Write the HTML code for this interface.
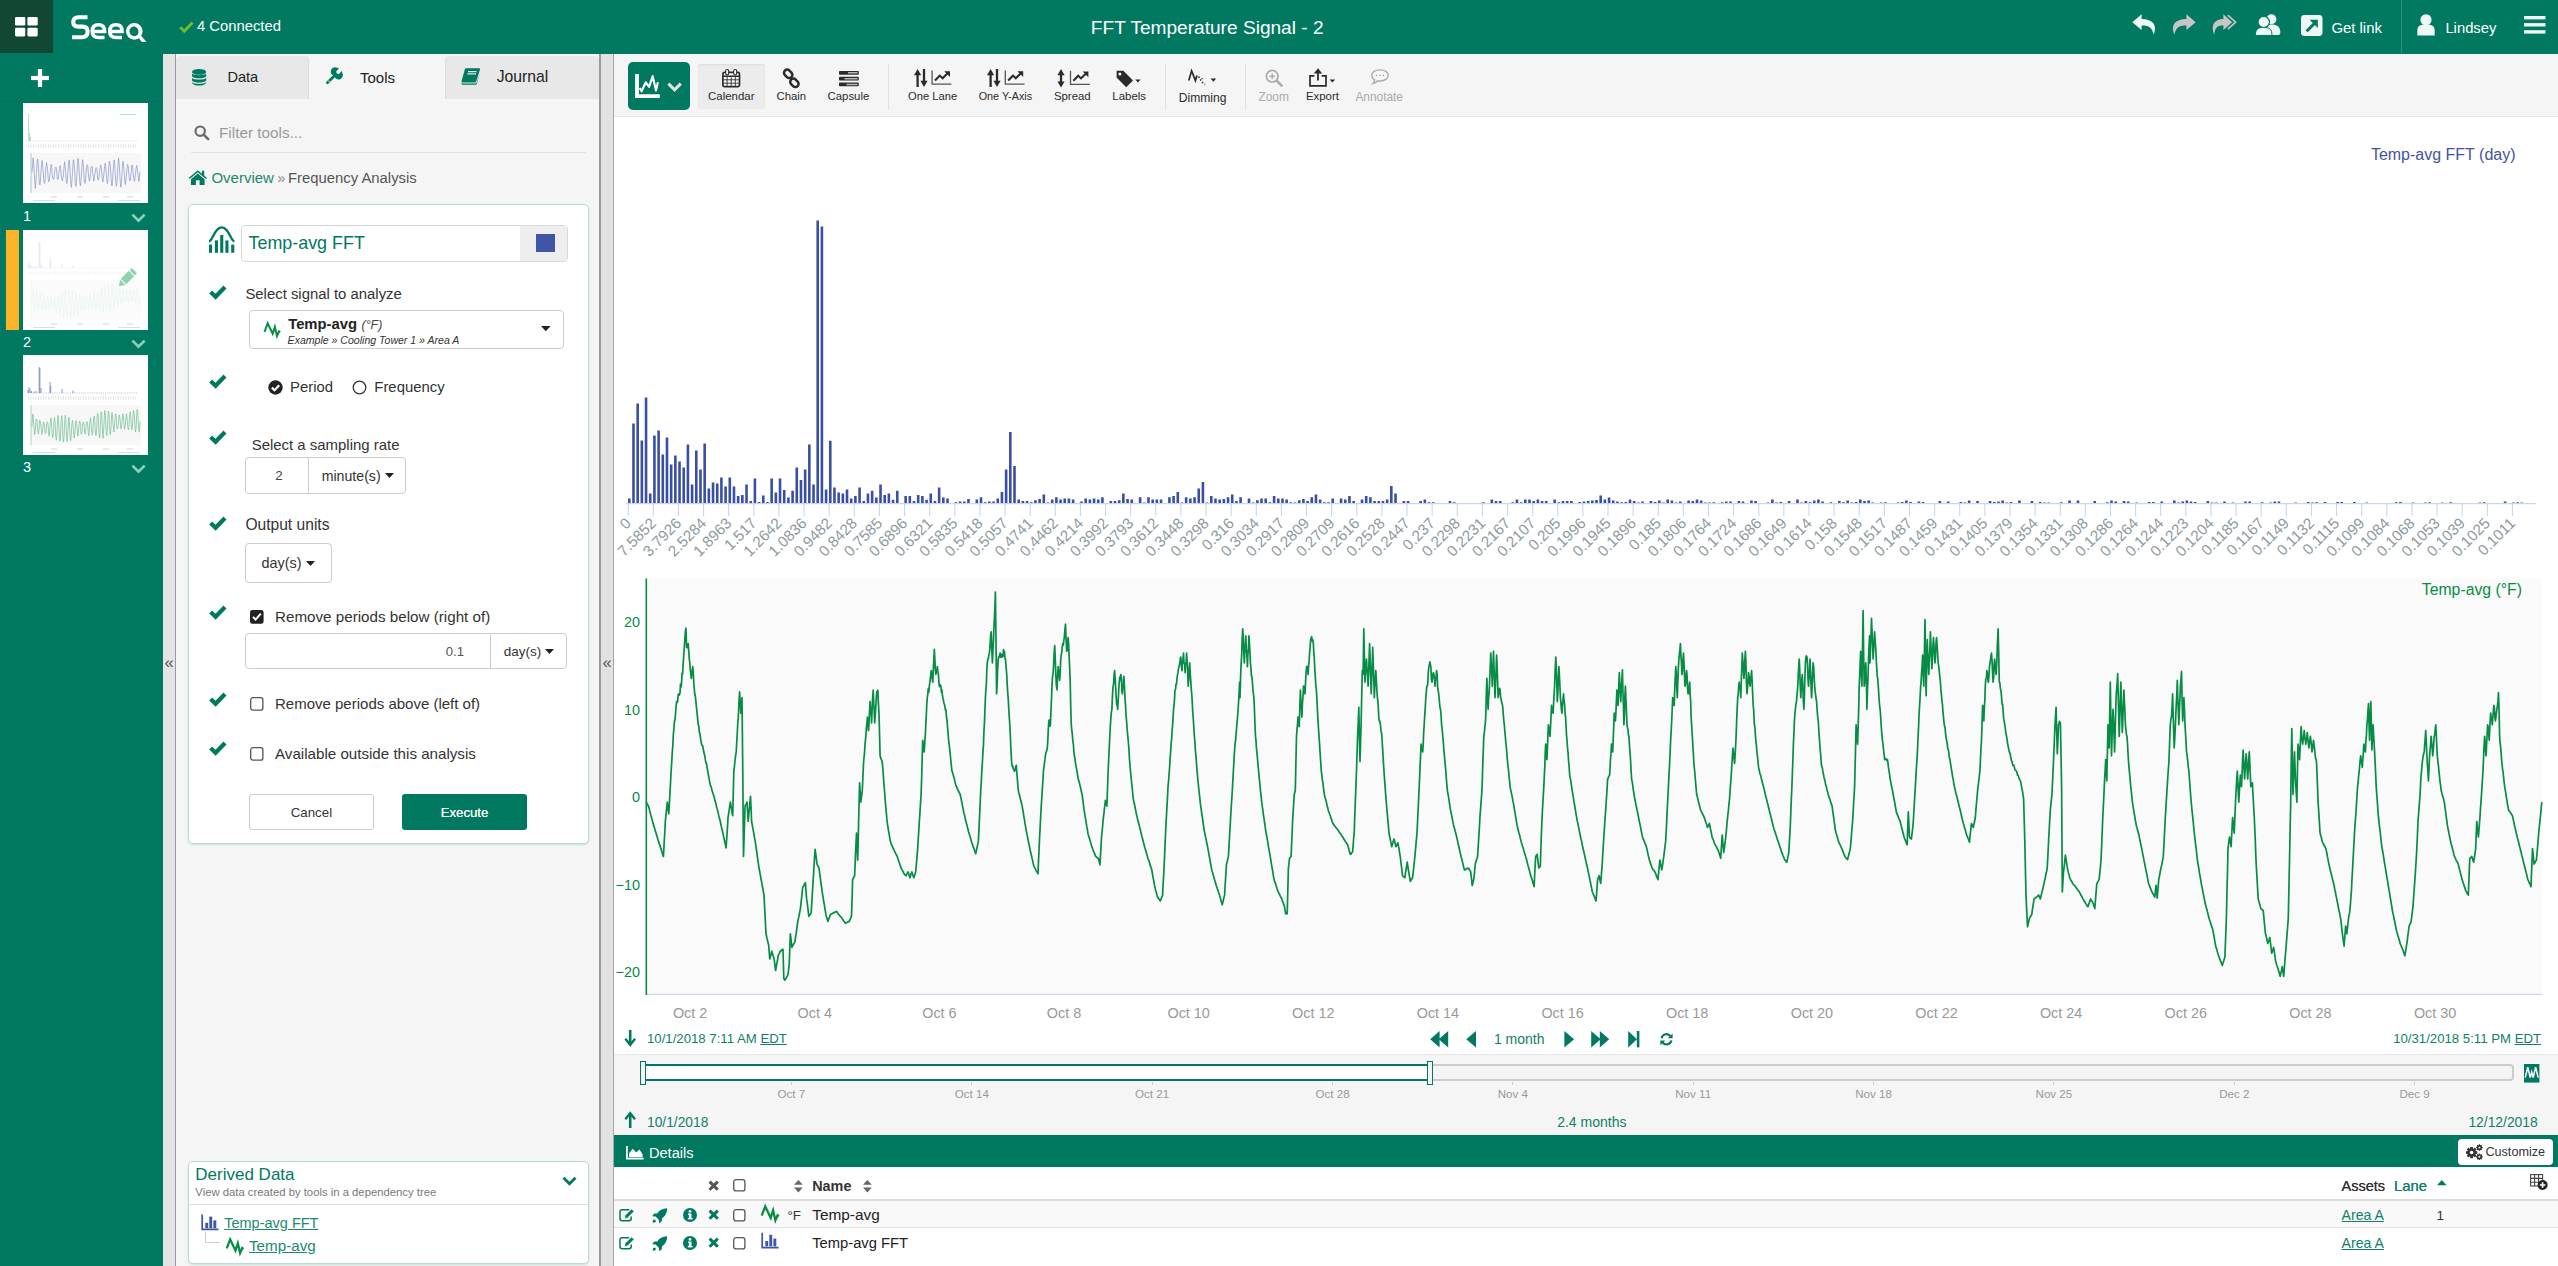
<!DOCTYPE html>
<html><head><meta charset="utf-8"><title>Seeq</title>
<style>
html,body{margin:0;padding:0;}
body{width:2558px;height:1266px;overflow:hidden;position:relative;background:#fff;font-family:"Liberation Sans",sans-serif;}
.a{position:absolute;box-sizing:border-box;}
.t{position:absolute;white-space:nowrap;line-height:1;}
.b{font-weight:bold;}
.i{font-style:italic;}
.u{text-decoration:underline;}
svg{overflow:visible;}
</style></head><body>
<div class="a" style="left:0.0px;top:0.0px;width:2558.0px;height:54.0px;background:#007960"></div>
<div class="a" style="left:0.0px;top:0.0px;width:53.0px;height:53.0px;background:#124734"></div>
<div class="a" style="left:0.0px;top:54.0px;width:163.0px;height:1212.0px;background:#007960"></div>
<div class="a" style="left:163.0px;top:54.0px;width:13.0px;height:1212.0px;background:#e4e4e4;border-right:1px solid #9a9a9a"></div>
<div class="a" style="left:176.0px;top:54.0px;width:424.0px;height:1212.0px;background:#f5f5f5"></div>
<div class="a" style="left:599.0px;top:54.0px;width:15.0px;height:1212.0px;background:#e2e2e2;border-left:2px solid #9a9a9a;border-right:1px solid #a6a6a6"></div>
<div class="a" style="left:614.0px;top:54.0px;width:1944.0px;height:63.0px;background:#f5f5f5;border-bottom:1px solid #e9e9e9"></div>
<svg class="a" style="left:15.0px;top:16.5px;" width="23.0" height="20.0" viewBox="0 0 23 20"><rect x="0" y="0" width="10.3" height="8.6" rx="1.3" fill="#fff"/><rect x="12.4" y="0" width="10.3" height="8.6" rx="1.3" fill="#fff"/><rect x="0" y="10.8" width="10.3" height="8.6" rx="1.3" fill="#fff"/><rect x="12.4" y="10.8" width="10.3" height="8.6" rx="1.3" fill="#fff"/></svg>
<svg class="a" style="left:71.0px;top:14.0px;" width="76.0" height="30.0" viewBox="0 0 76 30">
<g fill="none" stroke="#fff" stroke-width="4.1" stroke-linecap="butt">
<path d="M16.5 3.2 H7.5 Q2.2 3.2 2.2 8 Q2.2 12.6 7.5 12.6 H11.5 Q16.6 12.6 16.6 17.4 Q16.6 23.2 11 23.2 H1"/>
</g>
<g fill="none" stroke="#fff" stroke-width="3.5">
<path d="M22 17.5 H33.6 Q33.6 10.8 27.6 10.8 Q21.2 10.8 21.2 17.3 Q21.2 23.6 27.8 23.6 H33.5"/>
<path d="M39.5 17.5 H51.1 Q51.1 10.8 45.1 10.8 Q38.7 10.8 38.7 17.3 Q38.7 23.6 45.3 23.6 H51"/>
<circle cx="63.3" cy="17.3" r="6.6"/>
</g>
<path d="M64.5 12.2 Q69 14 68 20" fill="none" stroke="#fff" stroke-width="1.3"/>
<path d="M65.5 21 L69.5 21 L75.5 28 L70.8 28 Z" fill="#fff"/>
</svg>
<svg class="a" style="left:179.0px;top:20.5px;" width="15.0" height="12.0" viewBox="0 0 15 12"><path d="M1.2 6.2 L5.3 10.2 L13.6 1.6" fill="none" stroke="#6dbe2e" stroke-width="2.9"/></svg>
<div class="t " style="left:197.0px;top:18.6px;font-size:14.80px;color:#fff;">4 Connected</div>
<div class="t " style="left:1207.2px;transform:translateX(-50%);top:17.6px;font-size:19.10px;color:#fff;">FFT Temperature Signal - 2</div>
<svg class="a" style="left:2132.0px;top:13.8px;" width="24.0" height="21.0" viewBox="0 0 24 21"><path d="M9.6 0.3 L0.3 8.2 L9.6 16.1 V11.4 C16.5 11.2 20.4 13.4 21.6 20.8 C25.8 10.8 20.8 5.2 9.6 4.9 Z" fill="#eef7f4"/></svg>
<svg class="a" style="left:2172.0px;top:13.8px;" width="24.0" height="21.0" viewBox="0 0 24 21"><path d="M14.4 0.3 L23.7 8.2 L14.4 16.1 V11.4 C7.5 11.2 3.6 13.4 2.4 20.8 C-1.8 10.8 3.2 5.2 14.4 4.9 Z" fill="#c6c6c6"/></svg>
<svg class="a" style="left:2212.0px;top:13.8px;" width="25.0" height="21.0" viewBox="0 0 25 21"><path d="M11.4 0.3 L20.2 8.2 L11.4 16.1 V11.4 C5.5 11.2 3.1 13.4 2.1 20.8 C-1.6 10.8 2.4 5.2 11.4 4.9 Z" fill="#c6c6c6"/><path d="M15.8 1.2 L23.6 8.2 L15.8 15.2" fill="none" stroke="#c6c6c6" stroke-width="1.6"/></svg>
<svg class="a" style="left:2255.0px;top:13.5px;" width="26.0" height="22.0" viewBox="0 0 26 22"><circle cx="16.4" cy="5.2" r="5" fill="#eef7f4"/><path d="M10.5 21 C10.5 12.8 13 10.6 16.6 10.6 C21.8 10.6 25.4 12.6 25.4 19 Q25.4 21 23.2 21 Z" fill="#eef7f4"/><circle cx="8.7" cy="8" r="5.7" fill="#eef7f4" stroke="#007960" stroke-width="1.2"/><path d="M0.4 21.4 C0.4 14.5 3.6 13.4 8.7 13.4 C13.8 13.4 17 14.5 17 21.4 Z" fill="#eef7f4" stroke="#007960" stroke-width="1"/></svg>
<svg class="a" style="left:2301.0px;top:14.5px;" width="21.5" height="21.0" viewBox="0 0 21.5 21"><rect x="0" y="0" width="21.5" height="21" rx="3.4" fill="#eef7f4"/><path d="M5.6 16.2 L13.6 8.2" stroke="#007960" stroke-width="3"/><path d="M8.6 4.8 H16.8 V13 Z" fill="#007960"/></svg>
<div class="t " style="left:2331.4px;top:20.8px;font-size:14.90px;color:#fff;">Get link</div>
<div class="a" style="left:2401.0px;top:0.0px;width:1.0px;height:54.0px;background:#2f9079"></div>
<svg class="a" style="left:2417.0px;top:14.0px;" width="18.0" height="22.0" viewBox="0 0 18 22"><circle cx="9" cy="5.8" r="5.6" fill="#eef7f4"/><path d="M0.3 21.6 V16.5 C0.3 11.8 3.2 10.4 9 10.4 C14.8 10.4 17.7 11.8 17.7 16.5 V21.6 Z" fill="#eef7f4"/></svg>
<div class="t " style="left:2445.4px;top:20.9px;font-size:14.80px;color:#fff;">Lindsey</div>
<svg class="a" style="left:2524.0px;top:16.3px;" width="21.5" height="18.0" viewBox="0 0 21.5 18"><rect x="0" y="0" width="21.5" height="3.4" fill="#eef7f4"/><rect x="0" y="7.1" width="21.5" height="3.4" fill="#eef7f4"/><rect x="0" y="14.2" width="21.5" height="3.4" fill="#eef7f4"/></svg>
<svg class="a" style="left:31.0px;top:69.0px;" width="18.0" height="18.0" viewBox="0 0 18 18"><rect x="6.9" y="0" width="4.2" height="18" fill="#fff"/><rect x="0" y="6.9" width="18" height="4.2" fill="#fff"/></svg>
<div class="a" style="left:0.0px;top:100.5px;width:163.0px;height:1.0px;background:#027358"></div>
<div class="a" style="left:23.0px;top:103.0px;width:125.0px;height:100.0px;background:#fff"></div>
<svg class="a" style="left:23.0px;top:103.0px;" width="125.0" height="100.0" viewBox="0 0 125 100"><path d="M5 38 H115" stroke="#9fd7b8" stroke-width="0.6" stroke-dasharray="1.2 1" opacity=".7"/><path d="M5.5 38 V11 M6.5 38 V30 M7.5 38 V34" stroke="#9fd7b8" stroke-width="0.8"/><path d="M97 11.5 h16" stroke="#9fd7b8" stroke-width="1.2" opacity=".7"/><path d="M5 43 H113" stroke="#bbb" stroke-width="3" stroke-dasharray="0.8 1.7" opacity="0.55"/><rect x="8" y="50" width="110" height="40" fill="#f7f7f7" opacity="1"/><path d="M9.0 69.2 L9.6 61.8 L10.1 55.1 L10.7 60.8 L11.2 68.8 L11.8 79.1 L12.4 85.5 L12.9 79.0 L13.5 70.4 L14.1 60.0 L14.6 56.0 L15.2 60.3 L15.8 69.1 L16.3 80.5 L16.9 82.0 L17.4 78.4 L18.0 68.6 L18.6 60.4 L19.1 57.4 L19.7 62.7 L20.2 69.6 L20.8 77.0 L21.4 80.4 L21.9 79.2 L22.5 68.7 L23.1 63.1 L23.6 59.7 L24.2 63.7 L24.8 69.5 L25.3 77.0 L25.9 78.8 L26.4 76.5 L27.0 71.2 L27.6 64.6 L28.1 61.1 L28.7 63.3 L29.2 71.3 L29.8 75.1 L30.4 76.3 L30.9 76.4 L31.5 70.2 L32.1 65.7 L32.6 64.1 L33.2 64.4 L33.8 69.6 L34.3 76.2 L34.9 76.1 L35.4 76.0 L36.0 68.8 L36.6 65.2 L37.1 62.7 L37.7 65.6 L38.2 71.0 L38.8 76.1 L39.4 77.9 L39.9 75.4 L40.5 70.1 L41.1 63.2 L41.6 58.7 L42.2 63.9 L42.8 70.0 L43.3 78.3 L43.9 80.4 L44.4 77.4 L45.0 68.5 L45.6 61.0 L46.1 56.9 L46.7 60.8 L47.2 69.6 L47.8 80.2 L48.4 84.4 L48.9 78.5 L49.5 69.7 L50.1 59.3 L50.6 56.6 L51.2 61.6 L51.8 69.1 L52.3 80.7 L52.9 83.4 L53.4 78.4 L54.0 70.8 L54.6 59.7 L55.1 55.3 L55.7 60.2 L56.2 69.2 L56.8 79.1 L57.4 82.9 L57.9 78.8 L58.5 70.3 L59.1 60.7 L59.6 56.7 L60.2 60.4 L60.8 68.8 L61.3 78.0 L61.9 80.4 L62.4 78.4 L63.0 70.0 L63.6 63.6 L64.1 61.8 L64.7 62.1 L65.2 68.6 L65.8 75.1 L66.4 78.2 L66.9 76.1 L67.5 70.7 L68.1 64.0 L68.6 63.8 L69.2 63.2 L69.8 71.0 L70.3 74.2 L70.9 78.2 L71.4 73.6 L72.0 71.4 L72.6 65.8 L73.1 64.5 L73.7 65.2 L74.2 69.0 L74.8 76.5 L75.4 77.2 L75.9 74.1 L76.5 70.3 L77.1 64.4 L77.6 61.8 L78.2 63.1 L78.8 68.9 L79.3 76.5 L79.9 79.0 L80.4 75.5 L81.0 69.8 L81.6 63.6 L82.1 60.3 L82.7 62.4 L83.2 69.7 L83.8 77.5 L84.4 80.7 L84.9 77.5 L85.5 69.8 L86.1 60.1 L86.6 58.1 L87.2 61.5 L87.8 70.3 L88.3 78.0 L88.9 83.0 L89.4 79.4 L90.0 68.8 L90.6 61.6 L91.1 56.8 L91.7 60.1 L92.2 70.6 L92.8 79.0 L93.4 83.2 L93.9 79.9 L94.5 70.7 L95.1 60.7 L95.6 54.9 L96.2 60.9 L96.8 71.2 L97.3 79.9 L97.9 84.1 L98.4 80.3 L99.0 69.2 L99.6 60.9 L100.1 58.4 L100.7 63.3 L101.2 69.6 L101.8 79.0 L102.4 81.6 L102.9 77.3 L103.5 70.4 L104.1 64.6 L104.6 61.5 L105.2 63.0 L105.8 71.0 L106.3 75.1 L106.9 77.9 L107.4 77.0 L108.0 71.0 L108.6 64.0 L109.1 61.9 L109.7 65.2 L110.2 71.0 L110.8 75.6 L111.4 78.4 L111.9 75.6 L112.5 71.0 L113.1 65.4 L113.6 62.5 L114.2 64.7 L114.8 70.0 L115.3 75.3 L115.9 78.5 L116.4 74.7 L117.0 68.7" fill="none" stroke="#8b93c7" stroke-width="0.7"/><path d="M8 50 V90" stroke="#8b93c7" stroke-width="0.6"/><path d="M28 94 h6 M54 94 h6 M80 94 h6 M104 94 h6" stroke="#ccc" stroke-width="1.2" opacity=".8"/><path d="M10 97.5 h22 M95 97.5 h22" stroke="#bfe0d2" stroke-width="1.2" opacity=".8"/></svg>
<div class="a" style="left:23.0px;top:229.5px;width:125.0px;height:100.0px;background:#fff"></div>
<svg class="a" style="left:23.0px;top:229.5px;" width="125.0" height="100.0" viewBox="0 0 125 100"><path d="M5 38 H115" stroke="#dfe2f1" stroke-width="0.6" stroke-dasharray="1.2 1" opacity=".7"/><path d="M5 38 V35 M6 38 V32 M7 38 V34 M8.5 38 V36 M11 38 V36.5 M13 38 V36 M16.2 38 V12 M16.9 38 V13 M18 38 V33 M27 38 V27 M27.7 38 V31 M39 38 V34 M50 38 V35.5" stroke="#dfe2f1" stroke-width="0.8"/><path d="M5 43 H113" stroke="#bbb" stroke-width="3" stroke-dasharray="0.8 1.7" opacity="0.25"/><rect x="8" y="50" width="110" height="40" fill="#f7f7f7" opacity=".5"/><path d="M9.0 71.4 L9.4 59.7 L9.9 58.4 L10.3 60.5 L10.8 71.8 L11.2 77.5 L11.7 83.5 L12.2 79.4 L12.6 71.7 L13.1 64.2 L13.5 58.9 L13.9 62.7 L14.4 71.6 L14.9 77.8 L15.3 80.7 L15.8 77.5 L16.2 72.4 L16.6 65.8 L17.1 63.0 L17.5 64.3 L18.0 72.9 L18.4 77.8 L18.9 79.4 L19.4 77.5 L19.8 71.7 L20.2 65.2 L20.7 64.6 L21.1 66.4 L21.6 72.4 L22.1 78.6 L22.5 79.8 L23.0 77.0 L23.4 73.6 L23.9 69.3 L24.3 65.9 L24.8 69.3 L25.2 71.3 L25.7 76.3 L26.1 78.4 L26.6 78.8 L27.0 73.5 L27.4 69.0 L27.9 65.8 L28.4 68.4 L28.8 74.3 L29.2 76.9 L29.7 79.1 L30.1 77.0 L30.6 73.3 L31.1 69.2 L31.5 66.1 L31.9 67.7 L32.4 73.5 L32.8 78.3 L33.3 83.3 L33.8 79.2 L34.2 72.9 L34.6 66.8 L35.1 65.5 L35.5 66.6 L36.0 75.0 L36.5 80.3 L36.9 83.8 L37.4 79.9 L37.8 75.1 L38.2 67.2 L38.7 62.9 L39.2 64.9 L39.6 73.9 L40.0 81.8 L40.5 86.8 L41.0 83.7 L41.4 74.7 L41.8 64.7 L42.3 60.2 L42.8 66.3 L43.2 75.3 L43.7 82.0 L44.1 86.8 L44.5 83.0 L45.0 75.4 L45.5 63.4 L45.9 59.7 L46.4 65.8 L46.8 74.1 L47.2 83.0 L47.7 87.6 L48.1 83.2 L48.6 74.4 L49.1 64.1 L49.5 60.0 L49.9 63.5 L50.4 73.3 L50.9 82.8 L51.3 85.3 L51.8 81.6 L52.2 74.0 L52.6 66.1 L53.1 62.6 L53.5 65.1 L54.0 74.5 L54.5 81.9 L54.9 85.0 L55.3 81.7 L55.8 71.9 L56.2 66.9 L56.7 63.3 L57.2 66.3 L57.6 73.2 L58.0 78.2 L58.5 80.8 L59.0 80.3 L59.4 72.4 L59.9 68.4 L60.3 65.5 L60.8 66.8 L61.2 72.1 L61.6 78.1 L62.1 80.3 L62.6 76.9 L63.0 71.1 L63.4 66.5 L63.9 66.6 L64.3 68.2 L64.8 70.9 L65.2 77.7 L65.7 78.7 L66.2 76.0 L66.6 73.0 L67.0 66.0 L67.5 63.9 L67.9 66.4 L68.4 72.2 L68.8 76.4 L69.3 78.2 L69.8 77.5 L70.2 70.9 L70.7 66.8 L71.1 62.1 L71.6 66.4 L72.0 69.9 L72.5 76.9 L72.9 79.9 L73.3 77.0 L73.8 70.8 L74.2 64.4 L74.7 62.1 L75.2 63.4 L75.6 69.4 L76.0 77.2 L76.5 80.1 L77.0 76.0 L77.4 70.0 L77.8 62.2 L78.3 57.9 L78.8 62.5 L79.2 70.4 L79.7 77.1 L80.1 82.2 L80.5 79.1 L81.0 69.7 L81.4 60.3 L81.9 56.1 L82.4 59.1 L82.8 68.2 L83.2 79.3 L83.7 80.2 L84.1 79.0 L84.6 69.2 L85.1 60.2 L85.5 54.3 L86.0 59.6 L86.4 67.4 L86.8 77.9 L87.3 82.0 L87.8 77.8 L88.2 68.1 L88.7 60.1 L89.1 54.4 L89.5 57.9 L90.0 68.8 L90.5 75.0 L90.9 79.5 L91.3 75.7 L91.8 68.6 L92.2 58.8 L92.7 56.1 L93.2 59.3 L93.6 67.1 L94.0 74.7 L94.5 77.5 L94.9 74.6 L95.4 66.8 L95.9 59.7 L96.3 58.5 L96.8 61.6 L97.2 66.0 L97.6 74.4 L98.1 74.0 L98.6 72.1 L99.0 67.8 L99.5 59.8 L99.9 59.1 L100.3 62.5 L100.8 66.8 L101.2 71.5 L101.7 72.2 L102.2 71.2 L102.6 66.2 L103.0 62.3 L103.5 59.1 L104.0 62.4 L104.4 65.9 L104.8 71.2 L105.3 73.4 L105.8 69.7 L106.2 67.5 L106.7 61.3 L107.1 59.5 L107.5 62.8 L108.0 66.2 L108.4 70.8 L108.9 72.0 L109.4 70.1 L109.8 66.8 L110.2 60.9 L110.7 59.1 L111.1 61.3 L111.6 66.5 L112.1 71.0 L112.5 75.1 L113.0 71.7 L113.4 65.1 L113.8 61.0 L114.3 58.4 L114.8 58.5 L115.2 67.2 L115.7 73.4 L116.1 75.2 L116.5 73.4 L117.0 67.4" fill="none" stroke="#e6f4ed" stroke-width="0.7"/><path d="M8 50 V90" stroke="#e6f4ed" stroke-width="0.6"/><path d="M28 94 h6 M54 94 h6 M80 94 h6 M104 94 h6" stroke="#ccc" stroke-width="1.2" opacity=".8"/><path d="M10 97.5 h22 M95 97.5 h22" stroke="#bfe0d2" stroke-width="1.2" opacity=".8"/></svg>
<div class="a" style="left:23.0px;top:354.7px;width:125.0px;height:100.0px;background:#fff"></div>
<svg class="a" style="left:23.0px;top:354.7px;" width="125.0" height="100.0" viewBox="0 0 125 100"><path d="M5 38 H115" stroke="#6f7bc0" stroke-width="0.6" stroke-dasharray="1.2 1" opacity=".7"/><path d="M5 38 V35 M6 38 V32 M7 38 V34 M8.5 38 V36 M11 38 V36.5 M13 38 V36 M16.2 38 V12 M16.9 38 V13 M18 38 V33 M27 38 V27 M27.7 38 V31 M39 38 V34 M50 38 V35.5" stroke="#6f7bc0" stroke-width="0.8"/><path d="M5 43 H113" stroke="#bbb" stroke-width="3" stroke-dasharray="0.8 1.7" opacity="0.55"/><rect x="8" y="50" width="110" height="40" fill="#f7f7f7" opacity="1"/><path d="M9.0 71.4 L9.4 61.9 L9.9 59.0 L10.3 65.0 L10.8 69.4 L11.2 75.7 L11.7 79.8 L12.2 76.2 L12.6 71.8 L13.1 64.1 L13.5 64.2 L13.9 64.8 L14.4 71.3 L14.9 77.6 L15.3 79.0 L15.8 77.6 L16.2 71.9 L16.6 65.1 L17.1 65.8 L17.5 67.1 L18.0 71.1 L18.4 75.4 L18.9 79.4 L19.4 76.7 L19.8 73.2 L20.2 68.2 L20.7 66.9 L21.1 67.7 L21.6 72.8 L22.1 77.3 L22.5 78.4 L23.0 78.6 L23.4 71.9 L23.9 68.4 L24.3 66.7 L24.8 67.9 L25.2 71.7 L25.7 79.2 L26.1 81.3 L26.6 77.7 L27.0 71.6 L27.4 67.1 L27.9 62.9 L28.4 68.0 L28.8 73.2 L29.2 80.0 L29.7 82.7 L30.1 80.8 L30.6 74.6 L31.1 65.5 L31.5 62.5 L31.9 66.1 L32.4 72.9 L32.8 81.8 L33.3 85.2 L33.8 81.7 L34.2 74.2 L34.6 65.3 L35.1 60.4 L35.5 66.6 L36.0 73.4 L36.5 82.5 L36.9 86.2 L37.4 84.2 L37.8 75.2 L38.2 64.8 L38.7 60.7 L39.2 63.5 L39.6 75.1 L40.0 82.2 L40.5 87.1 L41.0 82.7 L41.4 73.5 L41.8 64.5 L42.3 60.3 L42.8 63.7 L43.2 74.1 L43.7 83.7 L44.1 86.7 L44.5 81.7 L45.0 74.6 L45.5 64.3 L45.9 62.1 L46.4 66.8 L46.8 75.2 L47.2 81.6 L47.7 85.8 L48.1 81.4 L48.6 73.9 L49.1 66.9 L49.5 65.4 L49.9 67.7 L50.4 73.7 L50.9 80.9 L51.3 83.1 L51.8 79.4 L52.2 74.5 L52.6 68.7 L53.1 65.7 L53.5 69.2 L54.0 72.0 L54.5 78.8 L54.9 81.2 L55.3 78.0 L55.8 72.3 L56.2 68.9 L56.7 66.1 L57.2 67.7 L57.6 71.7 L58.0 79.1 L58.5 79.1 L59.0 76.4 L59.4 72.0 L59.9 67.5 L60.3 67.4 L60.8 67.1 L61.2 72.0 L61.6 76.1 L62.1 79.1 L62.6 76.4 L63.0 71.9 L63.4 68.1 L63.9 66.4 L64.3 68.0 L64.8 70.7 L65.2 77.1 L65.7 80.8 L66.2 76.2 L66.6 70.9 L67.0 65.8 L67.5 62.7 L67.9 66.1 L68.4 72.2 L68.8 77.9 L69.3 80.1 L69.8 77.4 L70.2 70.5 L70.7 62.6 L71.1 61.1 L71.6 62.4 L72.0 72.1 L72.5 79.1 L72.9 80.7 L73.3 78.8 L73.8 70.9 L74.2 60.7 L74.7 58.3 L75.2 60.3 L75.6 71.0 L76.0 77.5 L76.5 83.0 L77.0 80.4 L77.4 70.9 L77.8 59.9 L78.3 56.9 L78.8 59.4 L79.2 69.1 L79.7 79.8 L80.1 83.4 L80.5 77.0 L81.0 68.9 L81.4 60.5 L81.9 55.3 L82.4 60.9 L82.8 70.1 L83.2 77.8 L83.7 80.7 L84.1 78.4 L84.6 68.6 L85.1 59.1 L85.5 56.0 L86.0 59.2 L86.4 69.3 L86.8 76.1 L87.3 79.7 L87.8 76.6 L88.2 69.4 L88.7 59.7 L89.1 57.5 L89.5 61.9 L90.0 68.5 L90.5 73.9 L90.9 77.2 L91.3 72.9 L91.8 66.4 L92.2 60.0 L92.7 58.7 L93.2 60.8 L93.6 67.3 L94.0 74.0 L94.5 73.6 L94.9 72.4 L95.4 68.1 L95.9 62.2 L96.3 60.0 L96.8 62.8 L97.2 65.3 L97.6 72.8 L98.1 73.8 L98.6 72.2 L99.0 67.6 L99.5 60.7 L99.9 58.7 L100.3 60.9 L100.8 66.4 L101.2 72.4 L101.7 74.2 L102.2 70.8 L102.6 66.7 L103.0 62.1 L103.5 58.7 L104.0 62.5 L104.4 67.5 L104.8 72.1 L105.3 75.0 L105.8 72.6 L106.2 66.5 L106.7 59.7 L107.1 56.9 L107.5 59.1 L108.0 64.7 L108.4 73.7 L108.9 74.8 L109.4 71.4 L109.8 65.5 L110.2 57.7 L110.7 55.6 L111.1 58.1 L111.6 65.0 L112.1 73.7 L112.5 76.9 L113.0 73.6 L113.4 67.0 L113.8 57.2 L114.3 54.3 L114.8 58.7 L115.2 67.5 L115.7 74.5 L116.1 77.2 L116.5 76.4 L117.0 66.2" fill="none" stroke="#6fbf92" stroke-width="0.7"/><path d="M8 50 V90" stroke="#6fbf92" stroke-width="0.6"/><path d="M28 94 h6 M54 94 h6 M80 94 h6 M104 94 h6" stroke="#ccc" stroke-width="1.2" opacity=".8"/><path d="M10 97.5 h22 M95 97.5 h22" stroke="#bfe0d2" stroke-width="1.2" opacity=".8"/></svg>
<div class="a" style="left:6.0px;top:229.5px;width:13.0px;height:100.0px;background:#fbb429"></div>
<svg class="a" style="left:116.0px;top:267.0px;" width="22.0" height="22.0" viewBox="0 0 22 22"><g transform="rotate(45 11 11)" fill="#8fd3b3"><rect x="7.2" y="0.5" width="7.6" height="3.2" rx="1"/><rect x="7.2" y="4.6" width="7.6" height="11.4"/><path d="M7.2 17 H14.8 L11 22.5 Z"/></g></svg>
<div class="t " style="left:23.0px;top:208.8px;font-size:14.50px;color:#fff;">1</div>
<svg class="a" style="left:130.5px;top:212.5px;" width="15.0" height="10.0" viewBox="0 0 15 10"><path d="M1.4 1.6 L7.5 7.6 L13.6 1.6" fill="none" stroke="#8fcfb9" stroke-width="2.7"/></svg>
<div class="t " style="left:23.0px;top:334.8px;font-size:14.50px;color:#fff;">2</div>
<svg class="a" style="left:130.5px;top:338.5px;" width="15.0" height="10.0" viewBox="0 0 15 10"><path d="M1.4 1.6 L7.5 7.6 L13.6 1.6" fill="none" stroke="#8fcfb9" stroke-width="2.7"/></svg>
<div class="t " style="left:23.0px;top:459.8px;font-size:14.50px;color:#fff;">3</div>
<svg class="a" style="left:130.5px;top:463.5px;" width="15.0" height="10.0" viewBox="0 0 15 10"><path d="M1.4 1.6 L7.5 7.6 L13.6 1.6" fill="none" stroke="#8fcfb9" stroke-width="2.7"/></svg>
<div class="t " style="left:164.4px;top:653.8px;font-size:16.50px;color:#555;">«</div>
<div class="t " style="left:602.4px;top:653.8px;font-size:16.50px;color:#555;">«</div>
<div class="a" style="left:176.0px;top:55.5px;width:132.7px;height:43.0px;background:#e8e8e8;border-radius:4px 4px 0 0;border-right:1px solid #dcdcdc"></div>
<div class="a" style="left:445.3px;top:55.5px;width:154.2px;height:43.0px;background:#e8e8e8;border-radius:4px 4px 0 0;border-left:1px solid #dcdcdc"></div>
<svg class="a" style="left:192.3px;top:68.6px;" width="14.2" height="16.6" viewBox="0 0 14.2 16.6"><g fill="#007960"><ellipse cx="7.1" cy="2.9" rx="7.1" ry="2.9"/><path d="M0 4.6 C1.6 6.8 12.6 6.8 14.2 4.6 V7.3 C12.6 10 1.6 10 0 7.3 Z"/><path d="M0 8.9 C1.6 11.1 12.6 11.1 14.2 8.9 V11.6 C12.6 14.3 1.6 14.3 0 11.6 Z"/><path d="M0 13.2 C1.6 15.4 12.6 15.4 14.2 13.2 V14 C12.6 17.4 1.6 17.4 0 14 Z"/></g></svg>
<div class="t " style="left:227.4px;top:70.3px;font-size:14.60px;color:#222;">Data</div>
<svg class="a" style="left:324.6px;top:68.0px;" width="17.0" height="17.0" viewBox="0 0 17 17"><g transform="translate(1.3 1.5) scale(0.82)"><g transform="rotate(45 8.75 8.75)" fill="#007960"><path d="M7.1 7.5 H10.4 V19.2 Q10.4 20.8 8.75 20.8 Q7.1 20.8 7.1 19.2 Z"/><path d="M4.2 -2 A5.2 5.2 0 0 0 7.1 8 H10.4 A5.2 5.2 0 0 0 13.3 -2 L11.1 -3.2 V1.7 L8.75 3.1 L6.4 1.7 V-3.2 Z"/></g><circle cx="3.3" cy="14.3" r="0.9" fill="#f5f5f5"/></g></svg>
<div class="t " style="left:360.0px;top:69.6px;font-size:15.00px;color:#222;">Tools</div>
<svg class="a" style="left:461.0px;top:68.0px;" width="19.2" height="17.0" viewBox="0 0 19.2 17"><g fill="#007960"><path d="M5.2 0.2 H18.4 Q19.4 0.4 19 1.6 L15.2 13.6 Q14.8 14.6 13.6 14.6 H1.6 Q0.2 14.4 0.6 13 L3.8 1.4 Q4.2 0.2 5.2 0.2 Z"/><path d="M0.5 14.4 Q0.2 16.8 2.6 16.8 H14.2 Q15.6 16.8 16 15.4 L19 4.6 L15.8 14.4 Q15.4 15.4 14 15.4 H2.4 Q1 15.4 0.5 14.4Z"/></g><path d="M7 3.6 H15.6 M6.4 5.9 H15" stroke="#e8e8e8" stroke-width="1.1"/></svg>
<div class="t " style="left:496.7px;top:69.2px;font-size:15.70px;color:#222;">Journal</div>
<svg class="a" style="left:194.0px;top:125.0px;" width="15.5" height="15.5" viewBox="0 0 15.5 15.5"><circle cx="6.2" cy="6.2" r="4.7" fill="none" stroke="#6b6b6b" stroke-width="2.2"/><path d="M9.6 9.6 L14.2 14.2" stroke="#6b6b6b" stroke-width="2.6" stroke-linecap="round"/></svg>
<div class="t " style="left:219.0px;top:124.8px;font-size:15.30px;color:#9a9a9a;">Filter tools...</div>
<div class="a" style="left:191.0px;top:151.5px;width:394.5px;height:1.0px;background:#e2e2e2"></div>
<svg class="a" style="left:188.0px;top:169.4px;" width="19.5" height="16.0" viewBox="0 0 19.5 16"><path d="M9.75 1.2 L0.6 8.9 L1.6 10 L9.75 3.2 L17.9 10 L18.9 8.9 L16.2 6.6 V1.8 H13.9 V4.7 Z" fill="#007960"/><path d="M9.75 4.6 L2.9 10.3 V16 H7.9 V11.3 H11.6 V16 H16.6 V10.3 Z" fill="#007960"/></svg>
<div class="t " style="left:211.4px;top:170.0px;font-size:15.00px;color:#1c8a70;">Overview</div>
<div class="t " style="left:277.5px;top:171.0px;font-size:14.00px;color:#888;">»</div>
<div class="t " style="left:288.0px;top:170.6px;font-size:14.85px;color:#555;">Frequency Analysis</div>
<div class="a" style="left:188.3px;top:203.5px;width:400.7px;height:640.5px;background:#fff;border:1px solid #b9ded3;border-radius:5px;box-shadow:0 1px 2px rgba(0,121,96,.18)"></div>
<svg class="a" style="left:207.5px;top:226.0px;" width="27.4" height="27.0" viewBox="0 0 27.4 27"><path d="M1 15.5 C5 14.5 6.6 1.4 13.7 1.4 C20.8 1.4 22.4 14.5 26.4 15.5" fill="none" stroke="#007960" stroke-width="2.3"/><g fill="#007960"><rect x="1" y="18.6" width="3.1" height="8.2"/><rect x="6.9" y="14.4" width="3.1" height="12.4"/><rect x="12.2" y="9" width="3.1" height="17.8"/><rect x="17.4" y="14.4" width="3.1" height="12.4"/><rect x="23.2" y="18.6" width="3.1" height="8.2"/></g></svg>
<div class="a" style="left:240.5px;top:224.7px;width:327.5px;height:37.3px;background:#fff;border:1px solid #d9d9d9;border-radius:4px"></div>
<div class="a" style="left:520.3px;top:225.5px;width:47.0px;height:35.7px;background:#eee;border-radius:0 4px 4px 0"></div>
<div class="a" style="left:536.3px;top:233.6px;width:18.8px;height:18.8px;background:#4055a5"></div>
<div class="t " style="left:248.5px;top:235.1px;font-size:17.90px;color:#007960;">Temp-avg FFT</div>
<svg class="a" style="left:208.6px;top:285.0px;" width="17.6" height="14.5" viewBox="0 0 17.6 14.5"><path d="M1.6 7 L6.6 11.8 L16 2" fill="none" stroke="#007960" stroke-width="4.2"/></svg>
<div class="t " style="left:245.4px;top:287.2px;font-size:14.90px;color:#333;">Select signal to analyze</div>
<div class="a" style="left:249.2px;top:310.0px;width:315.3px;height:39.2px;background:#fff;border:1px solid #ccc;border-radius:4px"></div>
<svg class="a" style="left:264.3px;top:322.0px;" width="16.5" height="15.0" viewBox="0 0 16.5 15"><path d="M0.5 9.8 L3.7 1.3 L8.7 11.8 L10.9 4.9 L13 14.1 L15 9.4 L16.2 10.3" fill="none" stroke="#068c45" stroke-width="2" stroke-linejoin="miter"/></svg>
<div class="t b" style="left:288.2px;top:317.0px;font-size:14.80px;color:#222;">Temp-avg</div>
<div class="t i" style="left:361.5px;top:319.2px;font-size:12.40px;color:#444;">(°F)</div>
<div class="t i" style="left:287.6px;top:335.3px;font-size:10.55px;color:#333;">Example » Cooling Tower 1 » Area A</div>
<svg class="a" style="left:541.2px;top:326.0px;" width="9.6" height="5.2" viewBox="0 0 9.6 5.2"><path d="M0 0 H9.6 L4.8 5.2 Z" fill="#222"/></svg>
<svg class="a" style="left:208.6px;top:374.0px;" width="17.6" height="14.5" viewBox="0 0 17.6 14.5"><path d="M1.6 7 L6.6 11.8 L16 2" fill="none" stroke="#007960" stroke-width="4.2"/></svg>
<svg class="a" style="left:267.8px;top:379.6px;" width="15.0" height="15.0" viewBox="0 0 15 15"><circle cx="7.5" cy="7.5" r="7.2" fill="#222"/><path d="M3.9 7.6 L6.5 10.2 L11.2 5.2" fill="none" stroke="#fff" stroke-width="2.2"/></svg>
<div class="t " style="left:290.0px;top:380.1px;font-size:14.90px;color:#333;">Period</div>
<svg class="a" style="left:352.0px;top:379.9px;" width="15.0" height="15.0" viewBox="0 0 15 15"><circle cx="7.5" cy="7.5" r="6.3" fill="#fff" stroke="#333" stroke-width="1.3"/></svg>
<div class="t " style="left:374.3px;top:380.1px;font-size:14.90px;color:#333;">Frequency</div>
<svg class="a" style="left:208.6px;top:430.0px;" width="17.6" height="14.5" viewBox="0 0 17.6 14.5"><path d="M1.6 7 L6.6 11.8 L16 2" fill="none" stroke="#007960" stroke-width="4.2"/></svg>
<div class="t " style="left:251.7px;top:437.6px;font-size:14.95px;color:#333;">Select a sampling rate</div>
<div class="a" style="left:245.4px;top:457.0px;width:161.0px;height:37.4px;background:#fff;border:1px solid #ccc;border-radius:4px"></div>
<div class="a" style="left:308.2px;top:457.0px;width:1.0px;height:37.4px;background:#ccc"></div>
<div class="t " style="left:279.0px;transform:translateX(-50%);top:469.4px;font-size:13.40px;color:#444;">2</div>
<div class="t " style="left:321.7px;top:468.5px;font-size:14.15px;color:#333;">minute(s)</div>
<svg class="a" style="left:384.6px;top:473.0px;" width="9.0" height="5.0" viewBox="0 0 9 5"><path d="M0 0 H9 L4.5 5 Z" fill="#222"/></svg>
<svg class="a" style="left:208.6px;top:516.0px;" width="17.6" height="14.5" viewBox="0 0 17.6 14.5"><path d="M1.6 7 L6.6 11.8 L16 2" fill="none" stroke="#007960" stroke-width="4.2"/></svg>
<div class="t " style="left:245.4px;top:517.0px;font-size:15.60px;color:#333;">Output units</div>
<div class="a" style="left:245.4px;top:543.0px;width:86.4px;height:40.2px;background:#fff;border:1px solid #ccc;border-radius:4px"></div>
<div class="t " style="left:261.6px;top:556.1px;font-size:14.40px;color:#333;">day(s)</div>
<svg class="a" style="left:306.0px;top:560.5px;" width="9.0" height="5.0" viewBox="0 0 9 5"><path d="M0 0 H9 L4.5 5 Z" fill="#222"/></svg>
<svg class="a" style="left:208.6px;top:604.5px;" width="17.6" height="14.5" viewBox="0 0 17.6 14.5"><path d="M1.6 7 L6.6 11.8 L16 2" fill="none" stroke="#007960" stroke-width="4.2"/></svg>
<svg class="a" style="left:250.1px;top:609.8px;" width="13.6" height="13.8" viewBox="0 0 13.6 13.8"><rect x="0" y="0" width="13.6" height="13.8" rx="2.4" fill="#222"/><path d="M3 6.9 L5.6 9.6 L10.8 3.6" fill="none" stroke="#fff" stroke-width="2"/></svg>
<div class="t " style="left:275.0px;top:608.7px;font-size:15.20px;color:#333;">Remove periods below (right of)</div>
<div class="a" style="left:245.4px;top:633.3px;width:321.6px;height:36.0px;background:#fff;border:1px solid #ccc;border-radius:4px"></div>
<div class="a" style="left:490.3px;top:633.3px;width:1.0px;height:36.0px;background:#ccc"></div>
<div class="t " style="right:2094.0px;top:644.9px;font-size:13.20px;color:#555;">0.1</div>
<div class="t " style="left:503.7px;top:644.8px;font-size:13.50px;color:#333;">day(s)</div>
<svg class="a" style="left:544.7px;top:648.6px;" width="9.0" height="5.0" viewBox="0 0 9 5"><path d="M0 0 H9 L4.5 5 Z" fill="#222"/></svg>
<svg class="a" style="left:208.6px;top:691.8px;" width="17.6" height="14.5" viewBox="0 0 17.6 14.5"><path d="M1.6 7 L6.6 11.8 L16 2" fill="none" stroke="#007960" stroke-width="4.2"/></svg>
<svg class="a" style="left:250.1px;top:696.9px;" width="13.6" height="13.8" viewBox="0 0 13.6 13.8"><rect x="0.7" y="0.7" width="12.2" height="12.4" rx="2.2" fill="#fff" stroke="#555" stroke-width="1.3"/></svg>
<div class="t " style="left:275.0px;top:695.8px;font-size:15.00px;color:#333;">Remove periods above (left of)</div>
<svg class="a" style="left:208.6px;top:741.2px;" width="17.6" height="14.5" viewBox="0 0 17.6 14.5"><path d="M1.6 7 L6.6 11.8 L16 2" fill="none" stroke="#007960" stroke-width="4.2"/></svg>
<svg class="a" style="left:250.1px;top:746.8px;" width="13.6" height="13.8" viewBox="0 0 13.6 13.8"><rect x="0.7" y="0.7" width="12.2" height="12.4" rx="2.2" fill="#fff" stroke="#555" stroke-width="1.3"/></svg>
<div class="t " style="left:275.0px;top:745.7px;font-size:15.15px;color:#333;">Available outside this analysis</div>
<div class="a" style="left:249.2px;top:793.8px;width:124.4px;height:36.7px;background:#fff;border:1px solid #ccc;border-radius:3px"></div>
<div class="t " style="left:311.4px;transform:translateX(-50%);top:805.6px;font-size:13.30px;color:#333;">Cancel</div>
<div class="a" style="left:402.0px;top:793.8px;width:125.0px;height:36.7px;background:#007960;border-radius:3px"></div>
<div class="t " style="left:464.5px;transform:translateX(-50%);top:805.7px;font-size:13.20px;color:#fff;text-shadow:0 0 .4px #fff">Execute</div>
<div class="a" style="left:188.3px;top:1160.6px;width:400.5px;height:103.6px;background:#fff;border:1px solid #b9ded3;border-radius:5px;box-shadow:0 1px 2px rgba(0,121,96,.18)"></div>
<div class="t " style="left:195.3px;top:1166.3px;font-size:17.00px;color:#007960;">Derived Data</div>
<div class="t " style="left:195.3px;top:1186.5px;font-size:11.30px;color:#777;">View data created by tools in a dependency tree</div>
<svg class="a" style="left:562.0px;top:1175.6px;" width="15.0" height="10.5" viewBox="0 0 15 10.5"><path d="M1.5 1.8 L7.5 7.8 L13.5 1.8" fill="none" stroke="#007960" stroke-width="2.8"/></svg>
<div class="a" style="left:189.3px;top:1204.3px;width:398.5px;height:1.0px;background:#ddd"></div>
<svg class="a" style="left:201.3px;top:1213.7px;" width="18.0" height="17.0" viewBox="0 0 18 17"><path d="M1.2 0.5 V15.4 H17.6" fill="none" stroke="#4055a5" stroke-width="1.7"/><g fill="#4055a5"><rect x="4.3" y="8.8" width="2.9" height="5.4"/><rect x="8.3" y="2.6" width="2.9" height="11.6"/><rect x="12.4" y="6.4" width="2.9" height="7.8"/></g></svg>
<div class="t u" style="left:224.2px;top:1215.8px;font-size:14.50px;color:#1c8a70;">Temp-avg FFT</div>
<svg class="a" style="left:204.5px;top:1232.0px;" width="15.0" height="12.0" viewBox="0 0 15 12"><path d="M0.5 0 V10.5 H14.5" fill="none" stroke="#ccc" stroke-width="1"/></svg>
<svg class="a" style="left:226.0px;top:1237.6px;" width="18.0" height="16.0" viewBox="0 0 16.5 15"><path d="M0.5 9.8 L3.7 1.3 L8.7 11.8 L10.9 4.9 L13 14.1 L15 9.4 L16.2 10.3" fill="none" stroke="#068c45" stroke-width="2.1" stroke-linejoin="miter"/></svg>
<div class="t u" style="left:249.0px;top:1237.9px;font-size:15.20px;color:#1c8a70;">Temp-avg</div>
<div class="a" style="left:628.0px;top:62.0px;width:62.0px;height:48.0px;background:#007960;border-radius:5px"></div>
<svg class="a" style="left:635.0px;top:73.5px;" width="26.0" height="25.0" viewBox="0 0 26 25"><path d="M2 0.1 V22.2 H24.8" fill="none" stroke="#fff" stroke-width="3.8"/><path d="M4.7 14 L6.6 17.3 L10.8 8.3 L14.1 12.8 L17.7 2.2 L21 16.6 L22.9 8.3" fill="none" stroke="#fff" stroke-width="2.1" stroke-linejoin="round"/></svg>
<svg class="a" style="left:666.6px;top:81.8px;" width="15.2" height="10.6" viewBox="0 0 15.2 10.6"><path d="M1.4 1.6 L7.6 7.9 L13.8 1.6" fill="none" stroke="#e2e2e2" stroke-width="3.1"/></svg>
<div class="a" style="left:697.5px;top:63.8px;width:67.4px;height:44.8px;background:#ececec;border-radius:3px;box-shadow:inset 0 1px 2px rgba(0,0,0,.08)"></div>
<svg class="a" style="left:722.4px;top:68.6px;" width="18.4" height="18.6" viewBox="0 0 18.4 18.6"><rect x="0.9" y="3.4" width="16.6" height="14.2" rx="1.6" fill="#fff" stroke="#2b2b2b" stroke-width="1.7"/><path d="M1 7.2 H17.4" stroke="#2b2b2b" stroke-width="1.5"/><path d="M1 10.8 H17.4 M1 14.2 H17.4 M5.1 7 V17.4 M9.2 7 V17.4 M13.3 7 V17.4" stroke="#2b2b2b" stroke-width="0.9"/><rect x="3.7" y="0.5" width="3" height="5.4" rx="1.5" fill="#fff" stroke="#2b2b2b" stroke-width="1.1"/><rect x="11.7" y="0.5" width="3" height="5.4" rx="1.5" fill="#fff" stroke="#2b2b2b" stroke-width="1.1"/></svg>
<div class="t " style="left:731.3px;transform:translateX(-50%);top:91.1px;font-size:11.45px;color:#2b2b2b;">Calendar</div>
<svg class="a" style="left:782.0px;top:68.6px;" width="18.6" height="18.6" viewBox="0 0 18.6 18.6"><g fill="none" stroke="#2b2b2b" stroke-width="2.5"><rect x="1.6" y="1.6" width="9.2" height="6.4" rx="3.2" transform="rotate(45 6.2 4.8)"/><rect x="7.8" y="10.6" width="9.2" height="6.4" rx="3.2" transform="rotate(45 12.4 13.8)"/></g></svg>
<div class="t " style="left:791.3px;transform:translateX(-50%);top:91.1px;font-size:11.40px;color:#2b2b2b;">Chain</div>
<svg class="a" style="left:838.8px;top:70.6px;" width="19.8" height="15.4" viewBox="0 0 19.8 15.4"><g fill="#2b2b2b"><rect x="0" y="0" width="19.8" height="3.7" rx=".8"/><rect x="0" y="5.8" width="19.8" height="3.7" rx=".8"/><rect x="0" y="11.6" width="19.8" height="3.7" rx=".8"/></g><path d="M9 1.85 H18.6 M5.5 7.65 H18.6 M7.5 13.45 H18.6" stroke="#b5b5b5" stroke-width="1.5"/></svg>
<div class="t " style="left:848.4px;transform:translateX(-50%);top:91.1px;font-size:11.40px;color:#2b2b2b;">Capsule</div>
<div class="a" style="left:888.0px;top:63.5px;width:1.0px;height:46.0px;background:#e0e0e0"></div>
<svg class="a" style="left:914.4px;top:68.6px;" width="39.0" height="18.0" viewBox="0 0 39 18"><path d="M3.6 4 V18" stroke="#2b2b2b" stroke-width="2.3"/><path d="M0 6.2 L3.6 0 L7.2 6.2 Z" fill="#2b2b2b"/><path d="M10 0 V14" stroke="#2b2b2b" stroke-width="2.3"/><path d="M6.4 11.8 L10 18 L13.6 11.8 Z" fill="#2b2b2b"/><g transform="translate(17.4 1.6)"><path d="M0.7 0 V13.6 H20" fill="none" stroke="#555" stroke-width="1.3"/><path d="M3.6 10 L8.4 5 L11.2 7.6 L16.2 2.6" fill="none" stroke="#2b2b2b" stroke-width="2.1"/><path d="M12.8 0.6 H18.6 V6.4 Z" fill="#2b2b2b"/></g></svg>
<div class="t " style="left:932.7px;transform:translateX(-50%);top:91.2px;font-size:11.20px;color:#2b2b2b;">One Lane</div>
<svg class="a" style="left:986.8px;top:68.6px;" width="39.0" height="18.0" viewBox="0 0 39 18"><path d="M3.6 4 V18" stroke="#2b2b2b" stroke-width="2.3"/><path d="M0 6.2 L3.6 0 L7.2 6.2 Z" fill="#2b2b2b"/><path d="M10 0 V14" stroke="#2b2b2b" stroke-width="2.3"/><path d="M6.4 11.8 L10 18 L13.6 11.8 Z" fill="#2b2b2b"/><g transform="translate(17.6 1.6)"><path d="M0.7 0 V13.6 H20" fill="none" stroke="#555" stroke-width="1.3"/><path d="M3.6 10 L8.4 5 L11.2 7.6 L16.2 2.6" fill="none" stroke="#2b2b2b" stroke-width="2.1"/><path d="M12.8 0.6 H18.6 V6.4 Z" fill="#2b2b2b"/></g></svg>
<div class="t " style="left:1005.4px;transform:translateX(-50%);top:91.4px;font-size:10.80px;color:#2b2b2b;">One Y-Axis</div>
<svg class="a" style="left:1056.5px;top:68.6px;" width="35.0" height="18.6" viewBox="0 0 35 18.6"><path d="M4 3 V15.6" stroke="#2b2b2b" stroke-width="2.3"/><path d="M0.4 6.2 L4 0 L7.6 6.2 Z M0.4 12.4 L4 18.6 L7.6 12.4 Z" fill="#2b2b2b"/><g transform="translate(12.8 1.8)"><path d="M0.7 0 V13.6 H20" fill="none" stroke="#555" stroke-width="1.3"/><path d="M3.6 10 L8.4 5 L11.2 7.6 L16.2 2.6" fill="none" stroke="#2b2b2b" stroke-width="2.1"/><path d="M12.8 0.6 H18.6 V6.4 Z" fill="#2b2b2b"/></g></svg>
<div class="t " style="left:1072.3px;transform:translateX(-50%);top:91.1px;font-size:11.40px;color:#2b2b2b;">Spread</div>
<svg class="a" style="left:1116.3px;top:69.6px;" width="25.0" height="17.0" viewBox="0 0 25 17"><path d="M0.6 0.8 H7.4 L17 10.4 L10.2 17.2 L0.6 7.6 Z" fill="#2b2b2b"/><circle cx="3.9" cy="4.1" r="1.5" fill="#f5f5f5"/><path d="M19.2 9.4 H24.6 L21.9 12.4 Z" fill="#2b2b2b"/></svg>
<div class="t " style="left:1129.2px;transform:translateX(-50%);top:91.1px;font-size:11.45px;color:#2b2b2b;">Labels</div>
<div class="a" style="left:1165.2px;top:63.5px;width:1.0px;height:46.0px;background:#e0e0e0"></div>
<svg class="a" style="left:1187.8px;top:70.0px;" width="29.0" height="15.0" viewBox="0 0 29 15"><path d="M0.8 10.4 L3.6 0.8 L7.4 10.6 L9 5.4" fill="none" stroke="#2b2b2b" stroke-width="1.7"/><path d="M10.6 6.6 L13 10.4 L14.6 12.6 L17 14.4" fill="none" stroke="#2b2b2b" stroke-width="1.5" stroke-dasharray="1.5 1.7"/><path d="M13.6 8.2 L15.4 9.8" stroke="#2b2b2b" stroke-width="1.3" stroke-dasharray="1.2 1.4"/><path d="M22.6 8.6 H28.2 L25.4 11.8 Z" fill="#2b2b2b"/></svg>
<div class="t " style="left:1202.6px;transform:translateX(-50%);top:91.8px;font-size:12.10px;color:#2b2b2b;">Dimming</div>
<div class="a" style="left:1245.0px;top:63.5px;width:1.0px;height:46.0px;background:#e0e0e0"></div>
<svg class="a" style="left:1265.0px;top:68.8px;" width="18.0" height="18.0" viewBox="0 0 18 18"><circle cx="7.2" cy="7.2" r="5.8" fill="none" stroke="#aaa" stroke-width="1.7"/><path d="M11.6 11.6 L16.6 16.6" stroke="#aaa" stroke-width="2.5" stroke-linecap="round"/><path d="M4.4 7.2 H10 M7.2 4.4 V10" stroke="#aaa" stroke-width="1.5"/></svg>
<div class="t " style="left:1273.7px;transform:translateX(-50%);top:91.5px;font-size:11.90px;color:#aaa;">Zoom</div>
<svg class="a" style="left:1308.7px;top:67.8px;" width="27.0" height="19.0" viewBox="0 0 27 19"><path d="M5.4 7.8 H1 V17.8 H17 V7.8 H12.6" fill="none" stroke="#2b2b2b" stroke-width="1.7"/><path d="M9 3.6 V12.6" stroke="#2b2b2b" stroke-width="1.8"/><path d="M4.8 5.4 L9 0.2 L13.2 5.4 Z" fill="#2b2b2b"/><path d="M20.6 11.4 H26.2 L23.4 14.6 Z" fill="#2b2b2b"/></svg>
<div class="t " style="left:1322.4px;transform:translateX(-50%);top:91.1px;font-size:11.40px;color:#2b2b2b;">Export</div>
<svg class="a" style="left:1370.8px;top:68.8px;" width="18.0" height="16.0" viewBox="0 0 18 16"><path d="M9 0.8 C13.8 0.8 17.2 3.2 17.2 6.4 C17.2 9.6 13.8 12 9 12 C8.2 12 7.4 11.9 6.7 11.8 C5.4 13.2 3.8 14.2 1.8 14.6 C2.9 13.4 3.6 12.2 3.7 10.8 C1.9 9.8 0.8 8.2 0.8 6.4 C0.8 3.2 4.2 0.8 9 0.8 Z" fill="none" stroke="#aaa" stroke-width="1.3"/><circle cx="5.6" cy="6.4" r=".8" fill="#aaa"/><circle cx="9" cy="6.4" r=".8" fill="#aaa"/><circle cx="12.4" cy="6.4" r=".8" fill="#aaa"/></svg>
<div class="t " style="left:1379.2px;transform:translateX(-50%);top:91.5px;font-size:11.90px;color:#aaa;">Annotate</div>
<div class="a" style="left:614.0px;top:117.0px;width:1944.0px;height:937.0px;background:#fff"></div>
<svg class="a" style="left:0;top:0" width="2558" height="1266" viewBox="0 0 2558 1266"><path d="M628.00 503.40v-5.00h2.6v5.00zM632.19 503.40v-80.00h2.6v80.00zM636.37 503.40v-100.00h2.6v100.00zM640.56 503.40v-63.00h2.6v63.00zM644.75 503.40v-106.00h2.6v106.00zM648.93 503.40v-10.00h2.6v10.00zM653.12 503.40v-68.00h2.6v68.00zM657.31 503.40v-73.00h2.6v73.00zM661.50 503.40v-49.00h2.6v49.00zM665.68 503.40v-66.00h2.6v66.00zM669.87 503.40v-39.00h2.6v39.00zM674.06 503.40v-48.00h2.6v48.00zM678.24 503.40v-42.00h2.6v42.00zM682.43 503.40v-36.00h2.6v36.00zM686.62 503.40v-59.00h2.6v59.00zM690.81 503.40v-19.00h2.6v19.00zM694.99 503.40v-53.00h2.6v53.00zM699.18 503.40v-34.00h2.6v34.00zM703.37 503.40v-60.00h2.6v60.00zM707.55 503.40v-15.00h2.6v15.00zM711.74 503.40v-21.00h2.6v21.00zM715.93 503.40v-20.00h2.6v20.00zM720.11 503.40v-26.00h2.6v26.00zM724.30 503.40v-17.00h2.6v17.00zM728.49 503.40v-26.00h2.6v26.00zM732.67 503.40v-17.00h2.6v17.00zM736.86 503.40v-7.50h2.6v7.50zM741.05 503.40v-8.50h2.6v8.50zM745.24 503.40v-19.00h2.6v19.00zM749.42 503.40v-2.50h2.6v2.50zM753.61 503.40v-25.00h2.6v25.00zM757.80 503.40v-1.50h2.6v1.50zM761.98 503.40v-8.00h2.6v8.00zM766.17 503.40v-1.50h2.6v1.50zM770.36 503.40v-25.00h2.6v25.00zM774.55 503.40v-11.00h2.6v11.00zM778.73 503.40v-25.00h2.6v25.00zM782.92 503.40v-13.50h2.6v13.50zM787.11 503.40v-6.00h2.6v6.00zM791.29 503.40v-12.60h2.6v12.60zM795.48 503.40v-36.00h2.6v36.00zM799.67 503.40v-23.50h2.6v23.50zM803.85 503.40v-34.00h2.6v34.00zM808.04 503.40v-59.00h2.6v59.00zM812.23 503.40v-19.00h2.6v19.00zM816.41 503.40v-283.00h2.6v283.00zM820.60 503.40v-277.00h2.6v277.00zM824.79 503.40v-14.00h2.6v14.00zM828.98 503.40v-62.60h2.6v62.60zM833.16 503.40v-16.00h2.6v16.00zM837.35 503.40v-11.00h2.6v11.00zM841.54 503.40v-10.00h2.6v10.00zM845.72 503.40v-14.00h2.6v14.00zM849.91 503.40v-5.00h2.6v5.00zM854.10 503.40v-7.50h2.6v7.50zM858.29 503.40v-16.00h2.6v16.00zM862.47 503.40v-2.50h2.6v2.50zM866.66 503.40v-10.00h2.6v10.00zM870.85 503.40v-12.60h2.6v12.60zM875.03 503.40v-6.00h2.6v6.00zM879.22 503.40v-19.00h2.6v19.00zM883.41 503.40v-8.50h2.6v8.50zM887.59 503.40v-10.00h2.6v10.00zM891.78 503.40v-3.70h2.6v3.70zM895.97 503.40v-12.60h2.6v12.60zM904.34 503.40v-7.50h2.6v7.50zM908.53 503.40v-7.50h2.6v7.50zM912.72 503.40v-2.50h2.6v2.50zM916.90 503.40v-8.50h2.6v8.50zM921.09 503.40v-7.50h2.6v7.50zM925.28 503.40v-3.70h2.6v3.70zM929.46 503.40v-10.00h2.6v10.00zM933.65 503.40v-2.50h2.6v2.50zM937.84 503.40v-15.80h2.6v15.80zM942.03 503.40v-5.80h2.6v5.80zM946.21 503.40v-5.00h2.6v5.00zM954.59 503.40v-1.20h2.6v1.20zM958.77 503.40v-2.00h2.6v2.00zM962.96 503.40v-2.00h2.6v2.00zM967.15 503.40v-4.50h2.6v4.50zM975.52 503.40v-3.80h2.6v3.80zM979.71 503.40v-6.20h2.6v6.20zM983.89 503.40v-1.20h2.6v1.20zM988.08 503.40v-2.00h2.6v2.00zM992.27 503.40v-2.00h2.6v2.00zM996.46 503.40v-5.00h2.6v5.00zM1000.64 503.40v-11.30h2.6v11.30zM1004.83 503.40v-34.00h2.6v34.00zM1009.02 503.40v-71.50h2.6v71.50zM1013.20 503.40v-37.50h2.6v37.50zM1017.39 503.40v-3.80h2.6v3.80zM1021.58 503.40v-2.50h2.6v2.50zM1025.77 503.40v-2.50h2.6v2.50zM1029.95 503.40v-1.20h2.6v1.20zM1034.14 503.40v-3.20h2.6v3.20zM1038.33 503.40v-4.50h2.6v4.50zM1042.51 503.40v-8.80h2.6v8.80zM1046.70 503.40v-0.80h2.6v0.80zM1050.89 503.40v-3.80h2.6v3.80zM1055.07 503.40v-6.20h2.6v6.20zM1059.26 503.40v-3.80h2.6v3.80zM1063.45 503.40v-5.00h2.6v5.00zM1067.63 503.40v-5.00h2.6v5.00zM1071.82 503.40v-3.80h2.6v3.80zM1080.20 503.40v-2.00h2.6v2.00zM1084.38 503.40v-5.00h2.6v5.00zM1088.57 503.40v-3.80h2.6v3.80zM1092.76 503.40v-5.00h2.6v5.00zM1096.94 503.40v-3.80h2.6v3.80zM1101.13 503.40v-6.20h2.6v6.20zM1109.51 503.40v-2.50h2.6v2.50zM1113.69 503.40v-2.50h2.6v2.50zM1117.88 503.40v-3.20h2.6v3.20zM1122.07 503.40v-10.00h2.6v10.00zM1126.25 503.40v-4.50h2.6v4.50zM1130.44 503.40v-3.80h2.6v3.80zM1138.81 503.40v-6.20h2.6v6.20zM1143.00 503.40v-0.80h2.6v0.80zM1147.19 503.40v-6.20h2.6v6.20zM1151.38 503.40v-3.80h2.6v3.80zM1155.56 503.40v-3.80h2.6v3.80zM1159.75 503.40v-3.80h2.6v3.80zM1168.12 503.40v-6.20h2.6v6.20zM1172.31 503.40v-7.50h2.6v7.50zM1176.50 503.40v-11.30h2.6v11.30zM1180.68 503.40v-0.80h2.6v0.80zM1184.87 503.40v-6.20h2.6v6.20zM1189.06 503.40v-5.00h2.6v5.00zM1193.24 503.40v-6.20h2.6v6.20zM1197.43 503.40v-15.00h2.6v15.00zM1201.62 503.40v-21.30h2.6v21.30zM1205.81 503.40v-0.80h2.6v0.80zM1209.99 503.40v-7.50h2.6v7.50zM1214.18 503.40v-5.00h2.6v5.00zM1218.37 503.40v-3.80h2.6v3.80zM1222.55 503.40v-4.50h2.6v4.50zM1226.74 503.40v-6.20h2.6v6.20zM1230.93 503.40v-8.80h2.6v8.80zM1235.12 503.40v-2.50h2.6v2.50zM1239.30 503.40v-6.20h2.6v6.20zM1247.68 503.40v-5.00h2.6v5.00zM1251.86 503.40v-0.80h2.6v0.80zM1256.05 503.40v-3.20h2.6v3.20zM1260.24 503.40v-5.00h2.6v5.00zM1264.42 503.40v-5.00h2.6v5.00zM1268.61 503.40v-1.20h2.6v1.20zM1272.80 503.40v-7.50h2.6v7.50zM1276.99 503.40v-5.00h2.6v5.00zM1281.17 503.40v-5.00h2.6v5.00zM1285.36 503.40v-3.80h2.6v3.80zM1289.55 503.40v-1.20h2.6v1.20zM1293.73 503.40v-0.80h2.6v0.80zM1297.92 503.40v-3.20h2.6v3.20zM1302.11 503.40v-4.50h2.6v4.50zM1306.29 503.40v-2.50h2.6v2.50zM1310.48 503.40v-6.20h2.6v6.20zM1314.67 503.40v-8.80h2.6v8.80zM1318.86 503.40v-3.80h2.6v3.80zM1323.04 503.40v-1.20h2.6v1.20zM1327.23 503.40v-1.20h2.6v1.20zM1331.42 503.40v-5.00h2.6v5.00zM1339.79 503.40v-5.00h2.6v5.00zM1343.98 503.40v-3.80h2.6v3.80zM1348.16 503.40v-7.50h2.6v7.50zM1352.35 503.40v-2.50h2.6v2.50zM1360.72 503.40v-3.80h2.6v3.80zM1364.91 503.40v-7.50h2.6v7.50zM1369.10 503.40v-6.20h2.6v6.20zM1373.29 503.40v-2.50h2.6v2.50zM1377.47 503.40v-2.50h2.6v2.50zM1381.66 503.40v-2.50h2.6v2.50zM1385.85 503.40v-3.80h2.6v3.80zM1390.03 503.40v-17.50h2.6v17.50zM1394.22 503.40v-10.00h2.6v10.00zM1402.60 503.40v-2.50h2.6v2.50zM1406.78 503.40v-2.50h2.6v2.50zM1419.34 503.40v-2.50h2.6v2.50zM1423.53 503.40v-3.80h2.6v3.80zM1427.72 503.40v-1.20h2.6v1.20zM1431.90 503.40v-1.20h2.6v1.20zM1448.65 503.40v-2.50h2.6v2.50zM1452.84 503.40v-1.20h2.6v1.20zM1482.15 503.40v-1.20h2.6v1.20zM1490.52 503.40v-3.80h2.6v3.80zM1494.71 503.40v-2.50h2.6v2.50zM1498.90 503.40v-2.50h2.6v2.50zM1511.46 503.40v-1.20h2.6v1.20zM1515.64 503.40v-3.80h2.6v3.80zM1519.83 503.40v-1.20h2.6v1.20zM1524.02 503.40v-3.80h2.6v3.80zM1528.20 503.40v-3.80h2.6v3.80zM1532.39 503.40v-2.50h2.6v2.50zM1536.58 503.40v-3.80h2.6v3.80zM1540.77 503.40v-2.50h2.6v2.50zM1544.95 503.40v-2.50h2.6v2.50zM1553.33 503.40v-3.80h2.6v3.80zM1557.51 503.40v-1.20h2.6v1.20zM1561.70 503.40v-2.50h2.6v2.50zM1565.89 503.40v-2.50h2.6v2.50zM1570.08 503.40v-2.50h2.6v2.50zM1578.45 503.40v-1.50h2.6v1.50zM1582.64 503.40v-2.00h2.6v2.00zM1586.82 503.40v-2.50h2.6v2.50zM1591.01 503.40v-3.00h2.6v3.00zM1595.20 503.40v-3.50h2.6v3.50zM1599.38 503.40v-7.80h2.6v7.80zM1603.57 503.40v-4.00h2.6v4.00zM1607.76 503.40v-6.00h2.6v6.00zM1611.95 503.40v-3.00h2.6v3.00zM1616.13 503.40v-2.00h2.6v2.00zM1620.32 503.40v-1.20h2.6v1.20zM1624.51 503.40v-1.50h2.6v1.50zM1628.69 503.40v-3.80h2.6v3.80zM1632.88 503.40v-2.50h2.6v2.50zM1637.07 503.40v-1.00h2.6v1.00zM1641.25 503.40v-2.00h2.6v2.00zM1649.63 503.40v-2.50h2.6v2.50zM1653.82 503.40v-1.50h2.6v1.50zM1658.00 503.40v-3.00h2.6v3.00zM1662.19 503.40v-1.00h2.6v1.00zM1666.38 503.40v-3.80h2.6v3.80zM1670.56 503.40v-3.00h2.6v3.00zM1674.75 503.40v-1.00h2.6v1.00zM1678.94 503.40v-2.00h2.6v2.00zM1687.31 503.40v-3.00h2.6v3.00zM1691.50 503.40v-2.50h2.6v2.50zM1695.69 503.40v-3.80h2.6v3.80zM1699.87 503.40v-3.00h2.6v3.00zM1704.06 503.40v-1.00h2.6v1.00zM1708.25 503.40v-1.00h2.6v1.00zM1712.43 503.40v-1.20h2.6v1.20zM1720.81 503.40v-1.20h2.6v1.20zM1724.99 503.40v-2.00h2.6v2.00zM1729.18 503.40v-2.00h2.6v2.00zM1737.56 503.40v-2.50h2.6v2.50zM1741.74 503.40v-2.00h2.6v2.00zM1750.12 503.40v-3.00h2.6v3.00zM1754.30 503.40v-2.50h2.6v2.50zM1766.86 503.40v-1.00h2.6v1.00zM1771.05 503.40v-3.80h2.6v3.80zM1775.24 503.40v-1.00h2.6v1.00zM1779.43 503.40v-1.50h2.6v1.50zM1787.80 503.40v-2.50h2.6v2.50zM1796.17 503.40v-3.80h2.6v3.80zM1800.36 503.40v-1.00h2.6v1.00zM1804.55 503.40v-2.50h2.6v2.50zM1808.73 503.40v-1.20h2.6v1.20zM1812.92 503.40v-3.00h2.6v3.00zM1817.11 503.40v-3.80h2.6v3.80zM1821.30 503.40v-2.00h2.6v2.00zM1829.67 503.40v-1.20h2.6v1.20zM1838.04 503.40v-2.50h2.6v2.50zM1842.23 503.40v-1.20h2.6v1.20zM1846.42 503.40v-3.00h2.6v3.00zM1850.60 503.40v-1.00h2.6v1.00zM1854.79 503.40v-1.50h2.6v1.50zM1858.98 503.40v-3.80h2.6v3.80zM1863.17 503.40v-2.50h2.6v2.50zM1867.35 503.40v-3.00h2.6v3.00zM1871.54 503.40v-1.00h2.6v1.00zM1879.91 503.40v-1.00h2.6v1.00zM1884.10 503.40v-1.20h2.6v1.20zM1896.66 503.40v-1.00h2.6v1.00zM1900.85 503.40v-1.50h2.6v1.50zM1905.04 503.40v-3.00h2.6v3.00zM1909.22 503.40v-1.50h2.6v1.50zM1917.60 503.40v-2.00h2.6v2.00zM1921.78 503.40v-1.50h2.6v1.50zM1938.53 503.40v-2.50h2.6v2.50zM1946.91 503.40v-2.00h2.6v2.00zM1959.47 503.40v-1.50h2.6v1.50zM1963.65 503.40v-1.00h2.6v1.00zM1967.84 503.40v-3.00h2.6v3.00zM1976.21 503.40v-2.50h2.6v2.50zM1988.78 503.40v-2.50h2.6v2.50zM1992.96 503.40v-1.50h2.6v1.50zM1997.15 503.40v-2.00h2.6v2.00zM2001.34 503.40v-3.00h2.6v3.00zM2005.52 503.40v-1.00h2.6v1.00zM2009.71 503.40v-1.50h2.6v1.50zM2018.08 503.40v-3.00h2.6v3.00zM2030.64 503.40v-2.50h2.6v2.50zM2039.02 503.40v-1.50h2.6v1.50zM2043.21 503.40v-1.00h2.6v1.00zM2047.39 503.40v-1.00h2.6v1.00zM2059.95 503.40v-1.20h2.6v1.20zM2068.33 503.40v-3.00h2.6v3.00zM2076.70 503.40v-3.00h2.6v3.00zM2093.45 503.40v-2.50h2.6v2.50zM2106.01 503.40v-1.20h2.6v1.20zM2110.20 503.40v-3.00h2.6v3.00zM2114.39 503.40v-2.00h2.6v2.00zM2122.76 503.40v-2.50h2.6v2.50zM2126.95 503.40v-2.00h2.6v2.00zM2135.32 503.40v-1.00h2.6v1.00zM2147.88 503.40v-1.50h2.6v1.50zM2152.07 503.40v-1.50h2.6v1.50zM2160.44 503.40v-2.00h2.6v2.00zM2173.00 503.40v-3.00h2.6v3.00zM2177.19 503.40v-1.00h2.6v1.00zM2181.38 503.40v-2.00h2.6v2.00zM2185.56 503.40v-3.00h2.6v3.00zM2189.75 503.40v-2.00h2.6v2.00zM2193.94 503.40v-1.50h2.6v1.50zM2206.50 503.40v-2.50h2.6v2.50zM2210.69 503.40v-1.00h2.6v1.00zM2214.87 503.40v-1.00h2.6v1.00zM2223.25 503.40v-2.00h2.6v2.00zM2231.62 503.40v-1.00h2.6v1.00zM2244.18 503.40v-2.00h2.6v2.00zM2248.37 503.40v-2.00h2.6v2.00zM2260.93 503.40v-1.20h2.6v1.20zM2269.30 503.40v-1.00h2.6v1.00zM2273.49 503.40v-2.00h2.6v2.00zM2277.68 503.40v-2.00h2.6v2.00zM2294.43 503.40v-1.00h2.6v1.00zM2306.99 503.40v-1.50h2.6v1.50zM2311.17 503.40v-1.00h2.6v1.00zM2315.36 503.40v-1.20h2.6v1.20zM2323.74 503.40v-1.50h2.6v1.50zM2336.30 503.40v-1.50h2.6v1.50zM2340.48 503.40v-1.50h2.6v1.50zM2353.04 503.40v-1.50h2.6v1.50zM2365.61 503.40v-1.00h2.6v1.00zM2394.91 503.40v-1.20h2.6v1.20zM2399.10 503.40v-1.50h2.6v1.50zM2411.66 503.40v-1.00h2.6v1.00zM2424.22 503.40v-1.00h2.6v1.00zM2428.41 503.40v-1.20h2.6v1.20zM2440.97 503.40v-1.00h2.6v1.00zM2449.35 503.40v-1.20h2.6v1.20zM2478.65 503.40v-1.00h2.6v1.00zM2482.84 503.40v-1.20h2.6v1.20zM2503.78 503.40v-2.00h2.6v2.00zM2512.15 503.40v-1.00h2.6v1.00zM2516.34 503.40v-1.20h2.6v1.20zM2520.52 503.40v-1.00h2.6v1.00z" fill="#3a4fa3"/><path d="M626 503.7 H2536" stroke="#ccd6eb" stroke-width="1.2"/><path d="M628.20 503.7v12.6M653.32 503.7v12.6M678.45 503.7v12.6M703.57 503.7v12.6M728.69 503.7v12.6M753.82 503.7v12.6M778.94 503.7v12.6M804.06 503.7v12.6M829.18 503.7v12.6M854.31 503.7v12.6M879.43 503.7v12.6M904.55 503.7v12.6M929.68 503.7v12.6M954.80 503.7v12.6M979.92 503.7v12.6M1005.05 503.7v12.6M1030.17 503.7v12.6M1055.29 503.7v12.6M1080.41 503.7v12.6M1105.54 503.7v12.6M1130.66 503.7v12.6M1155.78 503.7v12.6M1180.91 503.7v12.6M1206.03 503.7v12.6M1231.15 503.7v12.6M1256.28 503.7v12.6M1281.40 503.7v12.6M1306.52 503.7v12.6M1331.64 503.7v12.6M1356.77 503.7v12.6M1381.89 503.7v12.6M1407.01 503.7v12.6M1432.14 503.7v12.6M1457.26 503.7v12.6M1482.38 503.7v12.6M1507.51 503.7v12.6M1532.63 503.7v12.6M1557.75 503.7v12.6M1582.87 503.7v12.6M1608.00 503.7v12.6M1633.12 503.7v12.6M1658.24 503.7v12.6M1683.37 503.7v12.6M1708.49 503.7v12.6M1733.61 503.7v12.6M1758.74 503.7v12.6M1783.86 503.7v12.6M1808.98 503.7v12.6M1834.10 503.7v12.6M1859.23 503.7v12.6M1884.35 503.7v12.6M1909.47 503.7v12.6M1934.60 503.7v12.6M1959.72 503.7v12.6M1984.84 503.7v12.6M2009.97 503.7v12.6M2035.09 503.7v12.6M2060.21 503.7v12.6M2085.33 503.7v12.6M2110.46 503.7v12.6M2135.58 503.7v12.6M2160.70 503.7v12.6M2185.83 503.7v12.6M2210.95 503.7v12.6M2236.07 503.7v12.6M2261.20 503.7v12.6M2286.32 503.7v12.6M2311.44 503.7v12.6M2336.56 503.7v12.6M2361.69 503.7v12.6M2386.81 503.7v12.6M2411.93 503.7v12.6M2437.06 503.7v12.6M2462.18 503.7v12.6M2487.30 503.7v12.6M2512.43 503.7v12.6" stroke="#ccd6eb" stroke-width="1.1" fill="none"/><g font-size="15.3" fill="#8e9aa0" font-family="Liberation Sans"><text transform="translate(632.00 524.3) rotate(-45)" text-anchor="end">0</text><text transform="translate(657.12 524.3) rotate(-45)" text-anchor="end">7.5852</text><text transform="translate(682.25 524.3) rotate(-45)" text-anchor="end">3.7926</text><text transform="translate(707.37 524.3) rotate(-45)" text-anchor="end">2.5284</text><text transform="translate(732.49 524.3) rotate(-45)" text-anchor="end">1.8963</text><text transform="translate(757.62 524.3) rotate(-45)" text-anchor="end">1.517</text><text transform="translate(782.74 524.3) rotate(-45)" text-anchor="end">1.2642</text><text transform="translate(807.86 524.3) rotate(-45)" text-anchor="end">1.0836</text><text transform="translate(832.98 524.3) rotate(-45)" text-anchor="end">0.9482</text><text transform="translate(858.11 524.3) rotate(-45)" text-anchor="end">0.8428</text><text transform="translate(883.23 524.3) rotate(-45)" text-anchor="end">0.7585</text><text transform="translate(908.35 524.3) rotate(-45)" text-anchor="end">0.6896</text><text transform="translate(933.48 524.3) rotate(-45)" text-anchor="end">0.6321</text><text transform="translate(958.60 524.3) rotate(-45)" text-anchor="end">0.5835</text><text transform="translate(983.72 524.3) rotate(-45)" text-anchor="end">0.5418</text><text transform="translate(1008.85 524.3) rotate(-45)" text-anchor="end">0.5057</text><text transform="translate(1033.97 524.3) rotate(-45)" text-anchor="end">0.4741</text><text transform="translate(1059.09 524.3) rotate(-45)" text-anchor="end">0.4462</text><text transform="translate(1084.21 524.3) rotate(-45)" text-anchor="end">0.4214</text><text transform="translate(1109.34 524.3) rotate(-45)" text-anchor="end">0.3992</text><text transform="translate(1134.46 524.3) rotate(-45)" text-anchor="end">0.3793</text><text transform="translate(1159.58 524.3) rotate(-45)" text-anchor="end">0.3612</text><text transform="translate(1184.71 524.3) rotate(-45)" text-anchor="end">0.3448</text><text transform="translate(1209.83 524.3) rotate(-45)" text-anchor="end">0.3298</text><text transform="translate(1234.95 524.3) rotate(-45)" text-anchor="end">0.316</text><text transform="translate(1260.08 524.3) rotate(-45)" text-anchor="end">0.3034</text><text transform="translate(1285.20 524.3) rotate(-45)" text-anchor="end">0.2917</text><text transform="translate(1310.32 524.3) rotate(-45)" text-anchor="end">0.2809</text><text transform="translate(1335.44 524.3) rotate(-45)" text-anchor="end">0.2709</text><text transform="translate(1360.57 524.3) rotate(-45)" text-anchor="end">0.2616</text><text transform="translate(1385.69 524.3) rotate(-45)" text-anchor="end">0.2528</text><text transform="translate(1410.81 524.3) rotate(-45)" text-anchor="end">0.2447</text><text transform="translate(1435.94 524.3) rotate(-45)" text-anchor="end">0.237</text><text transform="translate(1461.06 524.3) rotate(-45)" text-anchor="end">0.2298</text><text transform="translate(1486.18 524.3) rotate(-45)" text-anchor="end">0.2231</text><text transform="translate(1511.31 524.3) rotate(-45)" text-anchor="end">0.2167</text><text transform="translate(1536.43 524.3) rotate(-45)" text-anchor="end">0.2107</text><text transform="translate(1561.55 524.3) rotate(-45)" text-anchor="end">0.205</text><text transform="translate(1586.67 524.3) rotate(-45)" text-anchor="end">0.1996</text><text transform="translate(1611.80 524.3) rotate(-45)" text-anchor="end">0.1945</text><text transform="translate(1636.92 524.3) rotate(-45)" text-anchor="end">0.1896</text><text transform="translate(1662.04 524.3) rotate(-45)" text-anchor="end">0.185</text><text transform="translate(1687.17 524.3) rotate(-45)" text-anchor="end">0.1806</text><text transform="translate(1712.29 524.3) rotate(-45)" text-anchor="end">0.1764</text><text transform="translate(1737.41 524.3) rotate(-45)" text-anchor="end">0.1724</text><text transform="translate(1762.54 524.3) rotate(-45)" text-anchor="end">0.1686</text><text transform="translate(1787.66 524.3) rotate(-45)" text-anchor="end">0.1649</text><text transform="translate(1812.78 524.3) rotate(-45)" text-anchor="end">0.1614</text><text transform="translate(1837.90 524.3) rotate(-45)" text-anchor="end">0.158</text><text transform="translate(1863.03 524.3) rotate(-45)" text-anchor="end">0.1548</text><text transform="translate(1888.15 524.3) rotate(-45)" text-anchor="end">0.1517</text><text transform="translate(1913.27 524.3) rotate(-45)" text-anchor="end">0.1487</text><text transform="translate(1938.40 524.3) rotate(-45)" text-anchor="end">0.1459</text><text transform="translate(1963.52 524.3) rotate(-45)" text-anchor="end">0.1431</text><text transform="translate(1988.64 524.3) rotate(-45)" text-anchor="end">0.1405</text><text transform="translate(2013.77 524.3) rotate(-45)" text-anchor="end">0.1379</text><text transform="translate(2038.89 524.3) rotate(-45)" text-anchor="end">0.1354</text><text transform="translate(2064.01 524.3) rotate(-45)" text-anchor="end">0.1331</text><text transform="translate(2089.13 524.3) rotate(-45)" text-anchor="end">0.1308</text><text transform="translate(2114.26 524.3) rotate(-45)" text-anchor="end">0.1286</text><text transform="translate(2139.38 524.3) rotate(-45)" text-anchor="end">0.1264</text><text transform="translate(2164.50 524.3) rotate(-45)" text-anchor="end">0.1244</text><text transform="translate(2189.63 524.3) rotate(-45)" text-anchor="end">0.1223</text><text transform="translate(2214.75 524.3) rotate(-45)" text-anchor="end">0.1204</text><text transform="translate(2239.87 524.3) rotate(-45)" text-anchor="end">0.1185</text><text transform="translate(2265.00 524.3) rotate(-45)" text-anchor="end">0.1167</text><text transform="translate(2290.12 524.3) rotate(-45)" text-anchor="end">0.1149</text><text transform="translate(2315.24 524.3) rotate(-45)" text-anchor="end">0.1132</text><text transform="translate(2340.36 524.3) rotate(-45)" text-anchor="end">0.1115</text><text transform="translate(2365.49 524.3) rotate(-45)" text-anchor="end">0.1099</text><text transform="translate(2390.61 524.3) rotate(-45)" text-anchor="end">0.1084</text><text transform="translate(2415.73 524.3) rotate(-45)" text-anchor="end">0.1068</text><text transform="translate(2440.86 524.3) rotate(-45)" text-anchor="end">0.1053</text><text transform="translate(2465.98 524.3) rotate(-45)" text-anchor="end">0.1039</text><text transform="translate(2491.10 524.3) rotate(-45)" text-anchor="end">0.1025</text><text transform="translate(2516.23 524.3) rotate(-45)" text-anchor="end">0.1011</text></g><rect x="646" y="578.5" width="1896" height="415.5" fill="#fafafa"/><path d="M646 994.3 H2542" stroke="#ccd6eb" stroke-width="1.2"/><path d="M646.3 578.5 V995" stroke="#068c45" stroke-width="1.6"/><path d="M646.0 801.4 L646.5 802.3 L647.1 803.6 L647.6 804.6 L648.2 805.6 L648.7 806.8 L649.3 808.8 L649.8 811.2 L650.4 813.4 L650.9 815.5 L651.5 817.4 L652.0 819.4 L652.6 821.5 L653.1 823.2 L653.6 825.4 L654.2 827.1 L654.7 828.7 L655.2 830.6 L655.7 831.9 L656.3 834.0 L656.8 835.9 L657.3 837.1 L657.8 839.2 L658.4 840.9 L658.9 842.5 L659.5 844.4 L660.1 845.8 L660.6 847.9 L661.2 849.3 L661.7 851.2 L662.3 853.1 L662.8 854.9 L663.4 856.4 L663.9 847.7 L664.4 838.7 L664.9 830.3 L665.3 821.5 L665.8 816.8 L666.3 811.6 L666.8 807.1 L667.3 802.2 L667.8 805.9 L668.3 810.1 L668.8 813.8 L669.4 803.2 L670.0 792.6 L670.6 781.4 L671.1 771.2 L671.7 762.6 L672.2 753.4 L672.8 745.9 L673.3 735.4 L673.9 728.7 L674.4 721.5 L674.9 720.5 L675.5 714.0 L676.0 707.2 L676.6 701.6 L677.1 702.5 L677.7 700.9 L678.3 694.3 L678.9 693.8 L679.4 695.1 L680.0 692.8 L680.5 684.1 L681.1 687.0 L681.6 682.2 L682.1 673.0 L682.6 674.1 L683.0 665.5 L683.5 659.0 L684.1 649.5 L684.7 641.8 L685.3 632.2 L685.9 628.0 L686.6 647.4 L687.1 647.6 L687.7 647.1 L688.2 643.5 L688.8 652.3 L689.3 659.0 L689.8 663.0 L690.3 669.8 L690.8 673.5 L691.3 678.4 L691.8 673.8 L692.3 669.9 L692.8 666.7 L693.4 675.3 L694.0 686.1 L694.5 691.3 L694.9 694.8 L695.4 696.6 L695.9 701.6 L696.5 707.7 L697.1 713.2 L697.7 719.6 L698.2 724.8 L698.8 725.7 L699.3 732.5 L699.9 733.1 L700.4 737.5 L700.9 740.3 L701.5 744.1 L702.0 745.4 L702.6 745.7 L703.2 748.4 L703.7 751.8 L704.3 754.1 L704.8 755.8 L705.4 759.9 L705.9 762.8 L706.5 763.7 L707.1 767.3 L707.6 770.5 L708.2 774.1 L708.7 776.3 L709.3 779.6 L709.8 782.8 L710.4 785.3 L711.0 786.5 L711.6 788.6 L712.2 791.0 L712.7 792.6 L713.3 794.5 L713.9 796.1 L714.5 798.3 L715.0 800.8 L715.5 802.3 L716.1 804.4 L716.6 807.0 L717.1 808.9 L717.7 810.8 L718.2 812.9 L718.7 815.4 L719.2 817.4 L719.8 819.4 L720.3 821.5 L720.8 824.0 L721.3 826.4 L721.9 828.9 L722.4 831.0 L722.9 833.2 L723.5 836.2 L724.0 838.1 L724.5 840.5 L725.0 843.1 L725.6 845.4 L726.1 847.9 L726.6 840.2 L727.1 832.9 L727.6 825.4 L728.0 817.7 L728.6 813.9 L729.2 809.9 L729.8 805.8 L730.4 802.2 L730.9 805.3 L731.5 808.8 L732.1 812.6 L732.7 815.7 L733.3 793.1 L733.8 771.2 L734.4 766.7 L735.0 760.5 L735.6 755.6 L736.2 751.9 L736.7 743.2 L737.2 734.5 L737.7 724.8 L738.2 719.0 L738.7 708.3 L739.2 697.9 L739.6 691.9 L740.2 702.5 L740.8 713.2 L741.4 708.2 L742.0 697.7 L742.7 763.5 L743.5 856.4 L744.0 839.6 L744.5 822.7 L745.1 806.1 L745.5 804.9 L746.0 804.4 L746.5 803.4 L747.0 802.2 L747.6 812.1 L748.2 821.5 L748.7 815.1 L749.3 809.2 L749.9 802.6 L750.5 796.4 L751.1 809.1 L751.6 821.5 L752.2 824.6 L752.8 828.2 L753.4 831.2 L754.0 834.7 L754.5 837.7 L755.1 840.9 L755.7 844.6 L756.2 848.5 L756.8 852.2 L757.3 856.2 L757.9 860.3 L758.4 863.9 L759.0 868.0 L759.6 870.9 L760.1 873.9 L760.7 877.0 L761.2 879.9 L761.8 883.2 L762.3 885.9 L762.9 889.0 L763.5 892.3 L764.0 895.1 L764.5 904.9 L765.0 914.5 L765.5 924.1 L766.0 933.8 L766.5 935.8 L767.0 938.5 L767.6 940.8 L768.1 942.9 L768.7 945.4 L769.2 952.3 L769.8 958.9 L770.3 957.3 L770.8 955.0 L771.3 953.3 L771.8 951.2 L772.3 953.0 L772.9 954.9 L773.5 956.7 L774.1 958.9 L774.6 962.7 L775.1 966.9 L775.6 970.5 L776.2 967.4 L776.7 964.2 L777.3 961.2 L777.8 958.4 L778.3 955.1 L778.8 954.3 L779.3 953.4 L779.8 952.4 L780.3 951.2 L780.8 950.6 L781.4 950.6 L781.9 950.0 L782.4 949.4 L783.0 949.3 L783.8 978.3 L784.3 979.5 L784.9 980.2 L785.4 979.2 L786.0 978.2 L786.5 977.4 L787.0 976.4 L787.5 975.4 L788.0 974.4 L788.6 969.6 L789.2 964.7 L789.8 949.2 L790.3 933.8 L790.9 938.1 L791.4 943.1 L791.9 947.3 L792.4 946.1 L792.9 945.5 L793.4 944.5 L794.0 943.4 L794.5 942.7 L795.0 941.5 L795.5 937.5 L796.1 933.9 L796.6 930.0 L797.2 926.0 L797.7 922.2 L798.2 919.6 L798.8 916.9 L799.3 914.1 L799.9 911.3 L800.4 908.6 L801.0 903.2 L801.6 898.1 L802.1 892.8 L802.7 887.3 L803.3 886.6 L803.8 885.6 L804.3 884.3 L804.9 883.7 L805.4 882.7 L806.0 891.1 L806.6 898.9 L807.2 903.0 L807.8 907.6 L808.3 912.0 L808.9 916.4 L809.5 915.5 L810.1 914.6 L810.7 913.7 L811.2 912.5 L811.7 904.5 L812.2 895.8 L812.7 887.9 L813.2 879.6 L813.7 871.9 L814.1 864.5 L814.6 856.8 L815.1 849.4 L815.6 853.2 L816.1 856.5 L816.6 860.7 L817.0 864.1 L817.5 865.2 L818.0 865.8 L818.5 867.2 L819.0 868.0 L819.5 872.0 L820.0 875.5 L820.5 879.4 L821.0 883.5 L821.6 887.3 L822.1 891.2 L822.6 894.5 L823.2 897.9 L823.7 901.3 L824.3 904.5 L824.8 907.9 L825.4 911.4 L825.9 914.4 L826.4 916.5 L826.9 918.0 L827.4 919.6 L827.9 921.4 L828.4 920.2 L829.0 918.3 L829.5 917.2 L830.0 915.8 L830.6 914.4 L831.1 914.0 L831.6 914.1 L832.2 913.7 L832.7 913.3 L833.2 912.8 L833.8 913.0 L834.3 912.2 L834.8 912.4 L835.3 912.0 L835.9 911.8 L836.4 911.3 L837.0 911.8 L837.5 912.8 L838.1 913.7 L838.6 914.3 L839.2 914.9 L839.7 915.6 L840.3 916.4 L840.9 916.7 L841.4 917.5 L842.0 918.4 L842.5 919.5 L843.1 919.8 L843.6 921.1 L844.2 921.4 L844.7 922.2 L845.3 923.3 L845.8 923.2 L846.4 922.7 L847.0 922.5 L847.5 922.0 L848.1 921.7 L848.6 921.8 L849.2 921.4 L849.7 920.3 L850.3 919.1 L850.9 917.5 L851.5 916.4 L852.1 898.3 L852.6 879.6 L853.1 878.6 L853.6 877.8 L854.1 876.7 L854.6 875.7 L855.1 865.2 L855.5 854.3 L856.0 843.9 L856.5 833.2 L857.1 846.6 L857.7 860.2 L858.2 840.7 L858.6 821.7 L859.1 802.3 L859.6 782.8 L860.2 792.6 L860.8 802.2 L861.3 798.2 L861.8 794.3 L862.3 790.6 L862.9 777.3 L863.5 763.5 L864.0 757.5 L864.5 753.2 L864.9 745.8 L865.4 740.3 L865.9 735.7 L866.4 727.4 L866.9 723.3 L867.4 717.1 L867.9 724.9 L868.5 730.6 L869.0 723.5 L869.5 712.0 L870.1 701.6 L870.6 709.7 L871.1 712.8 L871.6 722.9 L872.1 709.7 L872.6 699.1 L873.2 690.0 L873.7 702.7 L874.2 711.0 L874.7 722.9 L875.2 715.5 L875.7 708.8 L876.3 697.7 L876.8 691.5 L877.3 695.7 L877.8 690.0 L878.4 703.3 L879.0 713.2 L879.5 733.1 L880.1 755.8 L880.7 758.1 L881.3 759.4 L881.9 760.8 L882.4 763.5 L883.0 770.6 L883.6 779.4 L884.2 787.2 L884.8 794.5 L885.3 801.4 L885.9 808.1 L886.5 814.8 L887.1 821.5 L887.6 824.9 L888.1 828.1 L888.6 831.2 L889.2 834.3 L889.7 837.6 L890.2 840.9 L890.7 842.0 L891.2 843.8 L891.7 844.8 L892.2 846.2 L892.8 847.5 L893.3 848.6 L893.8 849.7 L894.4 851.1 L894.9 852.1 L895.5 852.9 L896.0 854.4 L896.6 855.0 L897.2 856.4 L897.7 857.9 L898.3 859.7 L898.8 861.5 L899.4 862.9 L899.9 864.9 L900.5 866.1 L901.0 868.0 L901.5 868.7 L902.1 870.0 L902.6 870.6 L903.1 871.8 L903.6 873.1 L904.1 873.8 L904.6 874.5 L905.1 874.9 L905.6 875.4 L906.1 875.7 L906.5 874.8 L907.0 873.6 L907.5 873.1 L908.0 871.9 L908.5 873.0 L909.0 874.5 L909.4 876.4 L909.9 877.7 L910.4 876.3 L910.9 874.5 L911.4 873.0 L911.9 871.9 L912.3 873.4 L912.8 874.7 L913.3 876.4 L913.8 877.7 L914.3 876.2 L914.8 874.7 L915.2 873.4 L915.7 871.9 L916.2 866.4 L916.7 860.2 L917.2 854.7 L917.7 848.6 L918.1 841.2 L918.6 833.4 L919.1 825.2 L919.6 817.7 L920.1 810.1 L920.6 802.1 L921.1 794.5 L921.7 776.9 L922.2 757.6 L922.7 740.3 L923.2 744.7 L923.7 746.6 L924.2 751.9 L924.8 741.6 L925.3 735.3 L925.8 724.8 L926.3 715.3 L926.8 703.9 L927.3 697.7 L927.8 694.0 L928.3 688.5 L928.8 692.3 L929.3 686.1 L929.8 682.9 L930.2 679.8 L930.7 675.3 L931.2 670.6 L931.7 672.6 L932.2 677.9 L932.8 682.2 L933.3 670.3 L933.8 660.4 L934.3 649.3 L934.8 658.4 L935.3 669.0 L935.9 674.5 L936.4 670.1 L936.9 670.8 L937.4 666.7 L937.9 672.5 L938.4 673.9 L938.9 682.2 L939.4 686.6 L939.9 686.3 L940.4 685.0 L940.9 686.1 L941.4 692.2 L941.8 689.7 L942.3 694.5 L942.8 697.7 L943.3 699.4 L943.8 702.7 L944.4 704.2 L944.9 706.9 L945.4 709.9 L945.9 709.3 L946.5 717.5 L947.0 720.1 L947.5 726.6 L948.1 733.3 L948.6 740.3 L949.1 743.6 L949.7 749.1 L950.2 754.2 L950.7 759.3 L951.2 764.0 L951.7 769.3 L952.3 772.2 L952.9 773.6 L953.5 776.1 L954.0 777.6 L954.6 780.1 L955.2 782.7 L955.8 784.9 L956.4 786.7 L956.9 787.6 L957.5 789.3 L958.0 789.9 L958.6 791.6 L959.1 792.1 L959.7 793.5 L960.2 794.5 L960.8 797.4 L961.3 799.9 L961.9 802.7 L962.4 805.4 L963.0 808.2 L963.5 811.1 L964.1 813.8 L964.7 815.8 L965.2 818.3 L965.8 820.7 L966.3 822.9 L966.9 824.9 L967.4 827.3 L968.0 829.3 L968.5 831.5 L969.1 833.4 L969.6 834.9 L970.2 837.1 L970.7 838.7 L971.3 841.1 L971.8 842.8 L972.4 844.2 L972.9 845.7 L973.5 847.7 L974.1 848.9 L974.6 850.4 L975.2 852.4 L975.7 853.7 L976.3 851.4 L976.8 848.7 L977.3 846.1 L977.9 843.7 L978.4 840.9 L979.0 828.6 L979.6 815.9 L980.2 803.1 L980.7 790.6 L981.3 781.5 L981.8 771.4 L982.4 762.0 L982.9 752.9 L983.5 744.1 L983.9 731.7 L984.4 723.6 L984.9 711.2 L985.4 697.7 L985.9 689.3 L986.4 684.0 L986.8 670.6 L987.3 662.9 L987.8 659.3 L988.3 658.5 L988.8 655.3 L989.3 653.2 L989.7 650.1 L990.2 642.9 L990.7 634.8 L991.2 631.9 L991.8 649.2 L992.4 662.9 L992.9 650.9 L993.4 641.5 L993.9 628.0 L994.4 618.0 L994.9 607.3 L995.4 592.1 L996.0 641.5 L996.6 693.8 L997.1 685.2 L997.6 670.7 L998.2 659.0 L998.6 658.1 L999.1 656.2 L999.6 655.6 L1000.1 653.2 L1000.6 657.4 L1001.1 655.2 L1001.5 654.3 L1002.0 657.1 L1002.5 655.4 L1003.0 656.5 L1003.5 649.7 L1004.0 651.3 L1004.5 651.9 L1005.0 659.0 L1005.5 659.0 L1006.1 667.0 L1006.7 674.0 L1007.3 685.9 L1007.8 693.8 L1008.3 699.6 L1008.8 709.6 L1009.3 717.4 L1009.8 724.8 L1010.3 734.2 L1010.7 744.8 L1011.2 754.4 L1011.7 763.5 L1012.2 766.1 L1012.8 765.9 L1013.3 769.1 L1013.9 769.5 L1014.4 771.2 L1014.9 770.4 L1015.4 767.7 L1015.9 766.4 L1016.3 765.4 L1016.8 772.7 L1017.3 778.3 L1017.8 784.8 L1018.3 790.6 L1018.8 792.9 L1019.4 794.8 L1019.9 796.9 L1020.5 799.5 L1021.0 801.6 L1021.6 803.6 L1022.2 806.1 L1022.7 809.3 L1023.3 812.6 L1023.8 816.1 L1024.4 819.4 L1024.9 822.9 L1025.5 826.2 L1026.0 829.3 L1026.6 832.3 L1027.1 834.9 L1027.7 837.7 L1028.2 840.3 L1028.8 843.3 L1029.3 845.8 L1029.9 848.6 L1030.4 851.3 L1031.0 853.6 L1031.6 856.2 L1032.1 858.6 L1032.7 860.8 L1033.2 863.4 L1033.8 866.1 L1034.3 866.9 L1034.8 867.9 L1035.4 868.7 L1035.9 870.0 L1036.4 871.1 L1037.0 872.0 L1037.5 872.8 L1038.0 873.8 L1038.5 861.3 L1039.1 849.1 L1039.6 837.0 L1040.1 828.4 L1040.5 819.8 L1041.0 810.7 L1041.5 802.2 L1042.0 794.6 L1042.5 786.5 L1043.0 779.3 L1043.4 771.2 L1043.9 767.5 L1044.4 763.3 L1044.9 759.9 L1045.4 755.8 L1045.9 752.9 L1046.3 751.8 L1046.8 750.4 L1047.3 748.0 L1047.8 740.7 L1048.3 729.2 L1048.9 720.9 L1049.4 719.9 L1049.9 726.2 L1050.4 724.8 L1050.9 712.7 L1051.4 701.3 L1052.0 686.1 L1052.5 676.6 L1053.0 674.5 L1053.5 666.7 L1054.1 654.0 L1054.7 645.5 L1055.2 657.3 L1055.8 674.5 L1056.4 685.8 L1057.0 690.0 L1057.6 676.0 L1058.1 666.7 L1058.7 671.7 L1059.2 676.2 L1059.7 680.3 L1060.2 672.1 L1060.7 659.9 L1061.2 655.1 L1061.8 652.3 L1062.3 646.5 L1062.8 643.5 L1063.3 645.2 L1063.8 640.6 L1064.3 637.7 L1064.9 629.9 L1065.5 624.2 L1066.1 639.6 L1066.7 651.3 L1067.2 650.3 L1067.7 640.0 L1068.2 637.7 L1068.7 645.1 L1069.2 657.9 L1069.8 670.6 L1070.3 685.9 L1070.8 709.7 L1071.3 724.8 L1071.8 730.3 L1072.3 733.8 L1072.8 740.6 L1073.4 744.5 L1073.9 752.0 L1074.4 755.8 L1074.9 758.0 L1075.5 763.1 L1076.1 766.3 L1076.6 769.1 L1077.2 772.2 L1077.7 776.5 L1078.3 779.0 L1078.8 781.1 L1079.4 782.8 L1079.9 785.1 L1080.5 787.3 L1081.0 789.7 L1081.6 792.5 L1082.1 794.5 L1082.6 798.3 L1083.1 801.9 L1083.6 806.1 L1084.1 809.9 L1084.6 813.1 L1085.2 816.6 L1085.7 819.8 L1086.3 823.3 L1086.8 826.7 L1087.4 829.7 L1087.9 833.2 L1088.5 835.4 L1089.0 836.9 L1089.6 839.0 L1090.2 841.1 L1090.7 842.6 L1091.3 844.9 L1091.8 846.7 L1092.4 847.8 L1092.9 849.6 L1093.5 851.1 L1094.0 852.4 L1094.6 853.6 L1095.1 854.9 L1095.7 856.4 L1096.2 856.5 L1096.8 857.3 L1097.3 857.7 L1097.8 858.2 L1098.4 858.3 L1098.9 860.3 L1099.4 862.4 L1099.9 864.9 L1100.5 855.8 L1101.0 846.5 L1101.5 837.0 L1102.0 832.5 L1102.5 827.5 L1102.9 822.4 L1103.4 817.7 L1103.9 813.6 L1104.4 808.9 L1104.9 804.5 L1105.4 800.3 L1105.9 802.3 L1106.4 804.3 L1106.9 806.1 L1107.4 792.3 L1107.9 777.2 L1108.5 763.5 L1108.9 754.8 L1109.4 744.5 L1109.9 735.0 L1110.4 724.8 L1110.9 717.8 L1111.4 711.9 L1111.9 709.3 L1112.5 695.0 L1113.1 686.1 L1113.6 684.0 L1114.1 674.6 L1114.6 670.6 L1115.2 678.7 L1115.7 688.1 L1116.2 697.7 L1116.7 704.8 L1117.2 705.5 L1117.7 709.3 L1118.3 698.2 L1118.8 688.5 L1119.3 682.2 L1119.8 677.2 L1120.3 679.8 L1120.8 674.5 L1121.4 677.8 L1121.9 690.9 L1122.4 693.8 L1122.9 686.3 L1123.4 684.5 L1123.9 676.4 L1124.4 686.1 L1125.0 697.2 L1125.5 705.4 L1126.1 716.0 L1126.6 721.3 L1127.2 729.9 L1127.8 736.4 L1128.3 741.7 L1128.9 748.8 L1129.4 758.3 L1130.0 765.1 L1130.5 771.2 L1131.1 777.4 L1131.6 782.6 L1132.1 787.2 L1132.7 793.2 L1133.2 798.3 L1133.7 801.0 L1134.3 803.5 L1134.8 805.9 L1135.3 808.5 L1135.8 810.9 L1136.3 813.8 L1136.9 816.1 L1137.4 818.2 L1138.0 820.7 L1138.5 822.9 L1139.1 824.6 L1139.6 827.2 L1140.2 829.3 L1140.7 831.6 L1141.3 833.8 L1141.8 836.1 L1142.4 838.3 L1143.0 840.4 L1143.5 842.7 L1144.1 844.8 L1144.6 847.0 L1145.2 848.7 L1145.7 850.6 L1146.3 852.2 L1146.8 854.2 L1147.4 856.4 L1147.9 858.3 L1148.5 859.7 L1149.0 861.4 L1149.6 863.0 L1150.1 864.9 L1150.7 866.6 L1151.2 868.0 L1151.8 869.9 L1152.3 873.0 L1152.8 875.9 L1153.3 878.6 L1153.9 881.7 L1154.4 884.7 L1154.9 887.3 L1155.4 889.4 L1156.0 891.4 L1156.5 893.1 L1157.1 895.4 L1157.6 897.0 L1158.1 898.0 L1158.7 898.4 L1159.2 899.3 L1159.8 900.4 L1160.3 900.9 L1160.9 899.3 L1161.5 897.9 L1162.1 896.3 L1162.6 895.1 L1163.1 884.5 L1163.7 874.6 L1164.2 864.1 L1164.7 853.4 L1165.1 843.0 L1165.6 832.2 L1166.1 821.5 L1166.6 813.1 L1167.1 804.1 L1167.6 795.6 L1168.0 786.7 L1168.6 780.8 L1169.1 774.0 L1169.6 767.4 L1170.1 759.2 L1170.6 752.0 L1171.1 744.1 L1171.6 739.3 L1172.1 730.6 L1172.6 725.2 L1173.1 717.1 L1173.6 708.6 L1174.0 706.5 L1174.5 698.9 L1175.0 690.0 L1175.5 689.5 L1176.0 684.2 L1176.5 684.2 L1177.0 678.4 L1177.4 675.5 L1177.9 672.9 L1178.4 669.0 L1178.9 666.7 L1179.4 664.9 L1179.9 662.5 L1180.3 658.0 L1180.8 657.1 L1181.4 666.1 L1182.0 670.6 L1182.5 662.5 L1183.0 659.0 L1183.5 653.2 L1184.0 663.3 L1184.6 663.2 L1185.1 672.6 L1185.6 663.3 L1186.1 663.1 L1186.6 653.2 L1187.1 661.0 L1187.7 672.9 L1188.2 686.1 L1188.7 679.9 L1189.2 668.8 L1189.7 662.9 L1190.2 672.8 L1190.7 679.9 L1191.2 688.3 L1191.7 693.8 L1192.2 701.0 L1192.7 711.5 L1193.3 718.7 L1193.8 727.3 L1194.4 736.4 L1194.9 742.0 L1195.4 750.5 L1196.0 756.7 L1196.5 763.5 L1197.1 771.2 L1197.6 776.7 L1198.1 782.0 L1198.6 787.1 L1199.1 791.6 L1199.7 796.9 L1200.2 802.2 L1200.7 806.1 L1201.3 809.9 L1201.8 814.0 L1202.4 817.4 L1202.9 821.5 L1203.5 825.5 L1204.0 829.3 L1204.6 832.1 L1205.1 834.8 L1205.7 837.6 L1206.3 840.4 L1206.8 843.1 L1207.4 845.8 L1207.9 848.6 L1208.5 851.9 L1209.0 854.7 L1209.6 858.0 L1210.1 860.5 L1210.7 864.1 L1211.2 867.0 L1211.8 869.9 L1212.3 871.8 L1212.9 873.8 L1213.4 875.5 L1214.0 877.5 L1214.5 879.4 L1215.1 881.4 L1215.7 883.5 L1216.2 885.3 L1216.8 886.9 L1217.3 888.6 L1217.9 890.2 L1218.4 891.7 L1219.0 893.6 L1219.5 895.1 L1220.1 897.3 L1220.6 898.8 L1221.1 901.0 L1221.7 902.8 L1222.2 904.8 L1222.8 902.6 L1223.4 899.8 L1224.0 897.4 L1224.6 895.1 L1225.0 887.2 L1225.5 879.7 L1226.0 872.1 L1226.5 864.1 L1227.0 862.2 L1227.5 860.3 L1227.9 858.4 L1228.4 856.4 L1228.9 847.9 L1229.4 838.9 L1229.9 830.4 L1230.4 821.5 L1230.8 814.1 L1231.3 806.2 L1231.8 798.6 L1232.3 790.6 L1232.8 781.4 L1233.3 772.5 L1233.7 765.2 L1234.2 755.8 L1234.7 748.7 L1235.2 742.6 L1235.7 739.5 L1236.2 732.5 L1236.6 727.8 L1237.1 722.3 L1237.6 715.6 L1238.1 709.3 L1238.6 701.7 L1239.1 692.5 L1239.6 682.2 L1240.0 697.7 L1240.6 676.8 L1241.2 662.9 L1241.7 654.5 L1242.2 638.0 L1242.7 628.8 L1243.2 636.6 L1243.7 650.5 L1244.3 662.9 L1244.8 653.2 L1245.3 644.3 L1245.8 635.8 L1246.3 649.3 L1246.8 653.1 L1247.4 666.7 L1247.9 654.3 L1248.4 649.1 L1248.9 635.8 L1249.4 643.0 L1249.9 651.1 L1250.4 662.9 L1250.9 667.8 L1251.4 675.9 L1251.9 676.6 L1252.4 682.2 L1252.9 689.6 L1253.4 693.5 L1253.9 697.7 L1254.4 708.7 L1255.0 725.2 L1255.5 736.4 L1256.0 740.7 L1256.5 748.6 L1257.0 753.4 L1257.5 759.0 L1258.1 765.5 L1258.6 771.2 L1259.1 776.8 L1259.6 781.4 L1260.1 786.5 L1260.6 792.2 L1261.2 796.7 L1261.7 802.2 L1262.2 806.2 L1262.8 809.7 L1263.3 814.1 L1263.9 817.8 L1264.4 821.5 L1265.0 825.2 L1265.5 829.3 L1266.1 832.8 L1266.7 836.2 L1267.3 839.3 L1267.9 842.6 L1268.4 846.3 L1269.0 849.7 L1269.6 852.8 L1270.2 856.4 L1270.7 859.5 L1271.3 863.3 L1271.8 866.1 L1272.4 869.5 L1273.0 873.2 L1273.5 876.5 L1274.1 879.6 L1274.6 881.4 L1275.2 882.6 L1275.7 884.3 L1276.3 886.2 L1276.8 887.7 L1277.4 889.5 L1277.9 891.2 L1278.5 892.1 L1279.0 893.5 L1279.6 894.4 L1280.1 895.6 L1280.7 896.9 L1281.2 897.6 L1281.8 898.9 L1282.3 900.8 L1282.9 902.0 L1283.4 903.4 L1284.0 904.8 L1284.5 906.7 L1285.1 910.3 L1285.7 913.7 L1286.2 913.9 L1286.7 913.8 L1287.2 913.7 L1287.8 890.7 L1288.4 868.0 L1289.0 863.1 L1289.5 858.3 L1290.1 857.6 L1290.6 856.8 L1291.1 856.4 L1291.6 844.6 L1292.1 833.3 L1292.6 821.5 L1293.1 812.4 L1293.7 803.3 L1294.2 794.5 L1294.8 792.4 L1295.3 790.6 L1295.9 763.0 L1296.5 736.4 L1297.0 729.3 L1297.5 724.5 L1298.0 717.1 L1298.6 721.1 L1299.2 726.7 L1299.8 708.3 L1300.4 690.0 L1300.9 701.0 L1301.4 706.8 L1301.9 717.1 L1302.4 703.9 L1303.0 696.5 L1303.5 686.1 L1304.0 686.6 L1304.5 692.9 L1305.0 693.8 L1305.5 683.4 L1306.0 673.5 L1306.6 666.7 L1307.1 666.4 L1307.6 668.4 L1308.1 674.5 L1308.6 665.8 L1309.1 661.4 L1309.7 651.3 L1310.2 646.0 L1310.7 639.6 L1311.2 638.1 L1311.7 636.7 L1312.2 641.0 L1312.8 639.7 L1313.3 643.1 L1313.8 651.9 L1314.3 659.0 L1314.8 669.1 L1315.3 677.0 L1315.9 686.1 L1316.4 690.2 L1316.9 698.2 L1317.4 709.3 L1317.9 719.0 L1318.4 727.2 L1318.9 734.4 L1319.3 740.3 L1319.8 748.1 L1320.3 756.0 L1320.8 763.5 L1321.3 771.2 L1321.8 774.6 L1322.3 779.6 L1322.8 782.2 L1323.3 786.4 L1323.8 790.5 L1324.4 794.5 L1324.9 797.0 L1325.5 798.8 L1326.0 800.8 L1326.6 803.1 L1327.1 805.5 L1327.7 807.7 L1328.2 809.9 L1328.8 811.8 L1329.4 813.2 L1330.0 815.1 L1330.6 816.5 L1331.1 818.7 L1331.7 819.9 L1332.3 821.9 L1332.9 823.5 L1333.4 824.3 L1333.9 825.1 L1334.5 825.7 L1335.0 826.3 L1335.5 826.9 L1336.0 827.6 L1336.6 828.6 L1337.1 828.9 L1337.6 829.7 L1338.2 830.2 L1338.7 831.2 L1339.2 832.2 L1339.8 832.9 L1340.4 833.5 L1340.9 834.4 L1341.5 835.3 L1342.0 836.2 L1342.6 836.9 L1343.2 837.8 L1343.7 839.0 L1344.3 839.5 L1344.8 840.5 L1345.4 841.5 L1345.9 842.3 L1346.5 842.9 L1347.0 843.7 L1347.6 844.8 L1348.1 846.6 L1348.7 848.5 L1349.2 850.8 L1349.8 852.7 L1350.3 854.4 L1350.9 854.0 L1351.5 852.9 L1352.0 852.6 L1352.6 851.7 L1353.1 845.8 L1353.6 839.1 L1354.2 833.2 L1354.7 817.8 L1355.3 802.2 L1355.9 786.6 L1356.5 771.2 L1357.1 752.3 L1357.6 736.4 L1358.2 723.8 L1358.8 707.4 L1359.4 735.1 L1360.0 761.6 L1360.5 744.6 L1361.1 724.8 L1361.7 696.3 L1362.3 670.6 L1363.1 674.5 L1363.8 628.8 L1364.4 656.6 L1365.0 682.2 L1365.5 671.8 L1366.0 668.3 L1366.5 659.0 L1367.1 671.2 L1367.6 675.8 L1368.1 686.1 L1368.6 673.6 L1369.1 657.5 L1369.6 643.5 L1370.2 661.2 L1370.7 676.2 L1371.2 693.8 L1371.7 679.6 L1372.2 665.3 L1372.7 647.4 L1373.3 665.0 L1373.8 679.1 L1374.3 697.7 L1374.8 686.6 L1375.3 681.4 L1375.8 670.6 L1376.4 681.0 L1376.9 690.8 L1377.4 697.7 L1377.9 701.3 L1378.4 709.2 L1378.8 717.6 L1379.3 720.9 L1379.9 721.2 L1380.5 725.2 L1381.1 732.0 L1381.6 732.5 L1382.2 741.8 L1382.8 751.1 L1383.4 762.4 L1384.0 771.2 L1384.5 778.4 L1385.1 786.4 L1385.7 794.9 L1386.3 802.2 L1386.8 808.2 L1387.4 814.8 L1387.9 820.8 L1388.5 826.8 L1389.0 833.2 L1389.5 835.8 L1390.1 838.4 L1390.6 841.2 L1391.2 844.2 L1391.7 846.7 L1392.3 844.8 L1392.9 842.6 L1393.4 841.0 L1394.0 839.0 L1394.5 840.7 L1395.0 842.6 L1395.5 844.8 L1396.0 846.7 L1396.4 846.0 L1396.9 844.8 L1397.4 843.8 L1397.9 842.8 L1398.5 846.4 L1399.1 849.4 L1399.6 852.8 L1400.2 856.4 L1400.8 861.0 L1401.4 866.2 L1402.0 870.6 L1402.5 875.7 L1403.1 876.3 L1403.7 876.8 L1404.3 877.2 L1404.9 877.7 L1405.4 873.6 L1406.0 870.0 L1406.6 866.2 L1407.2 862.2 L1407.7 865.4 L1408.2 868.8 L1408.7 871.9 L1409.2 874.9 L1409.8 878.1 L1410.3 881.5 L1410.9 880.3 L1411.4 879.5 L1412.0 878.4 L1412.6 877.7 L1413.2 872.4 L1413.8 867.0 L1414.3 862.0 L1414.9 856.4 L1415.5 849.7 L1416.1 842.9 L1416.7 836.3 L1417.2 829.3 L1417.7 818.6 L1418.2 808.2 L1418.7 797.2 L1419.2 786.7 L1419.7 775.6 L1420.1 765.5 L1420.6 755.8 L1421.1 744.1 L1421.6 747.9 L1422.1 747.8 L1422.7 751.9 L1423.2 744.0 L1423.7 731.9 L1424.2 724.8 L1424.7 715.7 L1425.2 708.7 L1425.8 697.7 L1426.3 692.1 L1426.8 686.5 L1427.3 686.1 L1427.8 682.9 L1428.3 672.2 L1428.9 666.7 L1429.4 664.8 L1429.9 661.9 L1430.4 664.8 L1430.9 667.1 L1431.4 679.3 L1432.0 682.2 L1432.5 678.1 L1433.0 673.6 L1433.5 672.6 L1434.0 675.1 L1434.5 678.7 L1435.0 686.1 L1435.6 678.2 L1436.1 677.1 L1436.6 670.6 L1437.1 674.1 L1437.6 687.1 L1438.1 690.0 L1438.7 694.0 L1439.3 699.8 L1439.9 707.2 L1440.5 709.3 L1441.0 714.1 L1441.6 724.8 L1442.2 729.7 L1442.8 736.4 L1443.4 743.2 L1443.9 750.3 L1444.5 756.7 L1445.1 763.5 L1445.7 769.6 L1446.3 777.8 L1446.8 784.1 L1447.4 790.6 L1447.9 793.5 L1448.5 796.7 L1449.0 800.2 L1449.5 803.3 L1450.0 807.0 L1450.5 809.9 L1451.0 812.3 L1451.6 815.1 L1452.1 817.7 L1452.6 820.4 L1453.1 822.6 L1453.6 825.4 L1454.1 827.2 L1454.7 829.3 L1455.2 831.3 L1455.7 833.1 L1456.2 835.0 L1456.7 837.0 L1457.3 839.7 L1457.8 842.2 L1458.4 844.7 L1458.9 846.7 L1459.5 849.5 L1460.0 852.2 L1460.6 854.4 L1461.1 856.7 L1461.7 858.7 L1462.2 861.2 L1462.8 863.1 L1463.4 865.8 L1463.9 867.9 L1464.5 869.9 L1465.0 869.7 L1465.6 869.6 L1466.1 868.8 L1466.7 869.0 L1467.2 868.3 L1467.8 868.2 L1468.3 868.0 L1468.9 868.8 L1469.5 870.1 L1470.1 870.6 L1470.7 871.9 L1471.2 876.3 L1471.7 880.6 L1472.2 885.4 L1472.7 883.7 L1473.2 881.6 L1473.7 879.6 L1474.3 874.6 L1474.8 869.0 L1475.3 864.1 L1475.9 862.1 L1476.5 860.0 L1477.0 858.3 L1477.6 856.4 L1478.2 846.6 L1478.8 837.1 L1479.4 827.2 L1479.9 817.7 L1480.4 810.9 L1480.9 804.4 L1481.4 797.7 L1481.9 790.6 L1482.4 777.5 L1482.8 763.1 L1483.3 749.9 L1483.8 736.4 L1484.3 732.9 L1484.8 727.3 L1485.3 723.6 L1485.7 717.1 L1486.3 695.4 L1486.9 678.4 L1487.5 696.2 L1488.1 709.3 L1488.6 698.0 L1489.1 692.9 L1489.6 682.2 L1490.2 667.6 L1490.8 653.2 L1491.3 666.8 L1491.8 673.2 L1492.3 686.1 L1492.9 666.9 L1493.5 651.3 L1494.0 667.1 L1494.5 680.5 L1495.0 697.7 L1495.5 685.3 L1496.1 669.5 L1496.6 655.1 L1497.1 667.1 L1497.6 680.9 L1498.1 697.7 L1498.6 694.1 L1499.1 691.3 L1499.6 688.3 L1500.1 690.0 L1500.5 696.1 L1501.0 698.7 L1501.5 701.3 L1502.0 703.5 L1502.6 705.6 L1503.2 713.0 L1503.7 719.6 L1504.3 724.8 L1504.9 732.1 L1505.4 737.2 L1505.9 743.7 L1506.5 748.5 L1507.0 755.8 L1507.5 761.2 L1508.1 766.5 L1508.6 771.0 L1509.1 776.9 L1509.6 781.1 L1510.1 786.7 L1510.6 789.5 L1511.2 792.1 L1511.7 794.6 L1512.2 796.8 L1512.7 799.8 L1513.2 802.2 L1513.8 805.3 L1514.3 808.8 L1514.9 812.1 L1515.4 815.3 L1516.0 818.8 L1516.5 821.8 L1517.1 825.4 L1517.6 827.5 L1518.2 830.0 L1518.7 832.2 L1519.3 834.1 L1519.9 836.3 L1520.4 838.7 L1521.0 840.9 L1521.5 842.9 L1522.1 844.8 L1522.7 846.8 L1523.3 848.6 L1523.9 850.9 L1524.4 852.6 L1525.0 854.2 L1525.6 856.4 L1526.2 858.3 L1526.8 860.5 L1527.3 862.8 L1527.9 865.3 L1528.5 867.1 L1529.1 869.6 L1529.7 871.3 L1530.2 873.8 L1530.8 875.9 L1531.4 877.4 L1531.9 879.0 L1532.5 881.0 L1533.0 882.9 L1533.6 884.9 L1534.1 886.6 L1534.6 876.5 L1535.1 866.2 L1535.7 856.4 L1536.2 855.6 L1536.7 854.9 L1537.2 854.4 L1537.7 859.1 L1538.2 863.5 L1538.8 868.0 L1539.3 867.6 L1539.8 866.9 L1540.3 866.1 L1540.8 851.0 L1541.3 836.2 L1541.9 821.5 L1542.3 812.8 L1542.8 804.3 L1543.3 795.3 L1543.8 786.7 L1544.3 776.2 L1544.8 766.3 L1545.2 753.6 L1545.7 744.1 L1546.3 752.3 L1546.9 759.6 L1547.4 749.0 L1547.9 735.7 L1548.4 724.8 L1549.0 728.7 L1549.5 733.6 L1550.0 736.4 L1550.5 727.3 L1551.0 717.1 L1551.5 705.4 L1552.0 709.4 L1552.6 712.3 L1553.1 713.2 L1553.6 703.2 L1554.1 694.4 L1554.6 686.1 L1555.2 669.1 L1555.8 657.1 L1556.3 668.4 L1556.8 683.2 L1557.3 701.6 L1557.9 692.3 L1558.4 677.0 L1558.9 666.7 L1559.4 675.6 L1559.9 685.9 L1560.4 697.7 L1560.9 702.9 L1561.5 710.3 L1562.0 713.2 L1562.5 705.0 L1563.0 699.1 L1563.5 693.8 L1564.0 700.5 L1564.6 704.1 L1565.1 713.2 L1565.6 717.7 L1566.0 725.0 L1566.5 734.8 L1567.0 740.3 L1567.6 748.6 L1568.1 753.6 L1568.6 761.4 L1569.2 767.7 L1569.7 775.1 L1570.2 777.9 L1570.8 781.0 L1571.3 784.4 L1571.8 788.1 L1572.3 791.0 L1572.8 794.5 L1573.4 797.6 L1573.9 801.4 L1574.5 804.5 L1575.0 807.4 L1575.6 811.1 L1576.1 814.6 L1576.7 817.7 L1577.2 820.6 L1577.8 823.1 L1578.3 825.8 L1578.9 828.6 L1579.5 831.6 L1580.0 834.3 L1580.6 837.0 L1581.1 839.4 L1581.7 841.7 L1582.2 844.8 L1582.8 847.2 L1583.3 849.8 L1583.9 851.8 L1584.4 854.4 L1585.0 856.7 L1585.5 859.6 L1586.1 861.7 L1586.6 864.6 L1587.2 866.7 L1587.7 869.2 L1588.3 871.9 L1588.9 874.8 L1589.4 877.2 L1590.0 880.4 L1590.5 882.7 L1591.1 885.6 L1591.6 888.2 L1592.2 891.2 L1592.7 892.8 L1593.3 894.1 L1593.8 895.1 L1594.4 896.6 L1594.9 898.2 L1595.5 899.7 L1596.0 900.9 L1596.6 894.0 L1597.1 886.4 L1597.6 879.6 L1598.1 878.4 L1598.6 877.1 L1599.1 875.7 L1599.6 878.3 L1600.2 881.1 L1600.7 883.5 L1601.2 876.9 L1601.7 870.5 L1602.2 864.1 L1602.7 855.4 L1603.3 846.0 L1603.8 837.0 L1604.3 830.1 L1604.7 823.4 L1605.2 816.5 L1605.7 809.9 L1606.2 802.2 L1606.7 794.4 L1607.2 786.9 L1607.6 779.0 L1608.1 778.6 L1608.6 776.5 L1609.1 776.0 L1609.6 775.1 L1610.1 767.3 L1610.5 759.0 L1611.0 753.4 L1611.5 744.1 L1612.1 749.3 L1612.7 751.9 L1613.2 739.8 L1613.7 726.6 L1614.2 713.2 L1614.8 718.1 L1615.4 720.9 L1615.9 712.8 L1616.4 700.7 L1616.9 690.0 L1617.5 699.0 L1618.1 705.4 L1618.7 687.8 L1619.3 672.6 L1619.8 683.3 L1620.3 693.4 L1620.8 701.6 L1621.3 689.9 L1621.8 681.3 L1622.4 669.8 L1622.9 691.2 L1623.4 703.5 L1623.9 724.8 L1624.4 714.7 L1624.9 696.5 L1625.4 686.1 L1626.0 700.8 L1626.5 712.8 L1627.0 724.8 L1627.5 727.5 L1628.0 729.6 L1628.4 735.0 L1628.9 736.4 L1629.5 745.3 L1630.0 752.5 L1630.6 760.9 L1631.1 770.5 L1631.6 779.0 L1632.2 781.9 L1632.7 784.9 L1633.2 789.2 L1633.7 792.3 L1634.2 795.3 L1634.7 798.3 L1635.3 801.3 L1635.8 803.9 L1636.4 806.5 L1636.9 809.6 L1637.5 811.9 L1638.1 814.7 L1638.6 817.7 L1639.2 820.7 L1639.7 823.0 L1640.3 825.8 L1640.8 828.5 L1641.4 831.6 L1641.9 834.2 L1642.5 837.0 L1643.0 838.5 L1643.6 839.5 L1644.1 841.2 L1644.7 842.3 L1645.2 844.2 L1645.8 845.0 L1646.3 846.7 L1646.9 848.8 L1647.4 851.4 L1647.9 853.8 L1648.4 855.9 L1648.9 857.7 L1649.4 860.2 L1650.0 861.6 L1650.5 863.6 L1651.1 864.9 L1651.6 866.5 L1652.2 868.0 L1652.7 869.0 L1653.2 869.8 L1653.8 870.1 L1654.3 871.2 L1654.9 871.9 L1655.4 873.0 L1655.9 874.3 L1656.4 875.7 L1656.9 877.2 L1657.4 878.2 L1658.0 879.6 L1658.4 874.5 L1658.9 870.0 L1659.4 865.2 L1659.9 860.2 L1660.4 862.5 L1660.9 865.1 L1661.3 867.6 L1661.8 869.9 L1662.3 866.6 L1662.8 863.4 L1663.3 859.5 L1663.8 856.4 L1664.2 852.8 L1664.7 848.8 L1665.2 844.9 L1665.7 840.9 L1666.2 831.2 L1666.7 821.5 L1667.1 812.1 L1667.6 802.2 L1668.1 793.0 L1668.6 782.7 L1669.1 772.9 L1669.6 763.5 L1670.1 753.1 L1670.5 743.1 L1671.0 733.8 L1671.5 724.8 L1672.1 712.2 L1672.7 697.7 L1673.2 701.2 L1673.7 704.9 L1674.2 705.4 L1674.7 690.1 L1675.2 678.4 L1675.8 666.7 L1676.3 673.9 L1676.8 688.4 L1677.3 697.7 L1677.8 682.8 L1678.3 669.2 L1678.9 659.0 L1679.4 654.0 L1679.9 649.9 L1680.4 643.5 L1680.9 655.8 L1681.4 662.2 L1682.0 674.5 L1682.5 669.9 L1683.0 658.5 L1683.5 653.2 L1684.0 663.4 L1684.5 675.1 L1685.0 686.1 L1685.6 683.8 L1686.1 674.6 L1686.6 670.6 L1687.1 676.6 L1687.6 688.7 L1688.1 693.8 L1688.7 693.4 L1689.2 686.2 L1689.7 682.2 L1690.2 695.3 L1690.7 701.2 L1691.1 716.5 L1691.6 724.8 L1692.2 733.9 L1692.8 744.7 L1693.4 754.3 L1693.9 763.5 L1694.5 769.4 L1695.0 775.3 L1695.6 782.3 L1696.1 788.1 L1696.7 794.5 L1697.2 796.4 L1697.8 798.5 L1698.3 801.2 L1698.9 803.5 L1699.4 805.3 L1700.0 807.5 L1700.5 809.9 L1701.1 810.9 L1701.6 812.3 L1702.2 813.2 L1702.7 814.2 L1703.3 815.2 L1703.8 816.7 L1704.4 817.7 L1704.9 819.2 L1705.4 821.0 L1705.9 822.6 L1706.5 824.0 L1707.0 825.8 L1707.5 827.4 L1708.0 826.6 L1708.5 825.6 L1708.9 824.4 L1709.4 823.5 L1710.0 826.4 L1710.5 829.1 L1711.1 831.7 L1711.6 834.5 L1712.1 837.0 L1712.7 838.6 L1713.2 839.7 L1713.7 840.7 L1714.2 842.5 L1714.7 843.8 L1715.2 844.8 L1715.7 845.6 L1716.3 846.6 L1716.8 847.5 L1717.3 848.9 L1717.8 849.3 L1718.3 850.6 L1718.9 852.4 L1719.5 854.3 L1720.1 856.2 L1720.7 858.3 L1721.2 850.3 L1721.7 842.7 L1722.2 835.1 L1722.7 841.0 L1723.2 846.6 L1723.7 852.5 L1724.3 848.7 L1724.8 844.6 L1725.3 840.9 L1725.9 835.3 L1726.5 829.3 L1727.0 823.3 L1727.6 817.7 L1728.1 813.0 L1728.6 808.2 L1729.1 802.9 L1729.6 798.3 L1730.0 791.5 L1730.5 784.7 L1731.0 778.5 L1731.5 771.2 L1732.0 762.7 L1732.5 754.3 L1733.0 748.0 L1733.6 754.0 L1734.1 759.2 L1734.6 763.5 L1735.1 755.5 L1735.6 746.4 L1736.1 736.4 L1736.6 722.5 L1737.2 707.8 L1737.7 697.7 L1738.2 694.5 L1738.7 686.9 L1739.2 682.2 L1739.7 689.2 L1740.3 689.7 L1740.8 697.7 L1741.3 680.2 L1741.8 668.4 L1742.3 653.2 L1742.8 660.5 L1743.4 669.6 L1743.9 678.4 L1744.4 671.0 L1744.9 658.3 L1745.4 651.3 L1745.9 661.8 L1746.4 682.1 L1747.0 693.8 L1747.5 688.1 L1748.0 681.8 L1748.5 672.6 L1749.0 675.3 L1749.5 682.8 L1750.1 686.1 L1750.6 679.2 L1751.1 676.1 L1751.6 670.6 L1752.1 680.6 L1752.6 692.6 L1753.2 705.4 L1753.7 710.6 L1754.3 723.7 L1754.9 727.4 L1755.5 736.4 L1756.0 742.3 L1756.5 746.3 L1757.0 753.4 L1757.5 756.7 L1758.1 763.0 L1758.6 767.4 L1759.1 769.7 L1759.7 772.5 L1760.2 774.3 L1760.8 775.6 L1761.3 778.6 L1761.9 780.0 L1762.4 782.8 L1763.0 784.9 L1763.6 787.3 L1764.1 789.0 L1764.7 791.6 L1765.2 794.3 L1765.8 796.5 L1766.3 798.3 L1766.9 800.6 L1767.4 803.0 L1768.0 804.7 L1768.5 807.3 L1769.1 809.3 L1769.6 811.8 L1770.2 813.8 L1770.7 815.9 L1771.3 818.4 L1771.8 820.5 L1772.4 822.9 L1773.0 825.2 L1773.5 827.1 L1774.1 829.3 L1774.6 830.9 L1775.2 832.3 L1775.7 834.0 L1776.3 835.7 L1776.8 837.5 L1777.4 839.5 L1777.9 840.9 L1778.5 842.5 L1779.0 844.0 L1779.6 845.7 L1780.1 847.6 L1780.7 848.9 L1781.2 851.0 L1781.8 852.5 L1782.3 853.5 L1782.8 855.2 L1783.3 856.5 L1783.9 857.4 L1784.4 859.2 L1784.9 860.2 L1785.4 860.4 L1785.9 861.0 L1786.3 861.9 L1786.8 862.2 L1787.3 859.9 L1787.8 857.1 L1788.3 855.0 L1788.8 852.5 L1789.3 843.8 L1789.8 834.7 L1790.3 825.4 L1790.8 812.8 L1791.3 799.6 L1791.9 786.7 L1792.4 772.4 L1792.9 759.4 L1793.4 744.1 L1793.9 733.8 L1794.4 721.0 L1795.0 713.2 L1795.5 708.1 L1796.0 703.6 L1796.5 701.6 L1797.0 694.9 L1797.5 689.8 L1798.0 682.2 L1798.6 668.2 L1799.2 659.0 L1799.7 668.5 L1800.2 684.4 L1800.8 697.7 L1801.3 687.4 L1801.8 679.5 L1802.3 674.5 L1802.8 685.1 L1803.3 700.1 L1803.9 709.3 L1804.4 696.3 L1804.9 677.8 L1805.4 662.9 L1805.9 657.5 L1806.4 655.8 L1807.0 657.1 L1807.5 664.0 L1808.0 678.8 L1808.5 686.1 L1809.0 677.4 L1809.5 670.8 L1810.0 659.0 L1810.6 674.8 L1811.1 687.7 L1811.6 697.7 L1812.1 687.1 L1812.6 671.7 L1813.1 662.9 L1813.7 667.3 L1814.2 678.2 L1814.7 686.1 L1815.2 692.1 L1815.7 695.4 L1816.1 698.5 L1816.6 701.6 L1817.2 710.8 L1817.8 717.5 L1818.4 722.4 L1818.9 732.5 L1819.5 739.9 L1820.1 748.3 L1820.7 755.2 L1821.3 763.5 L1821.8 766.8 L1822.3 767.7 L1822.8 770.9 L1823.3 773.5 L1823.8 776.2 L1824.4 779.0 L1824.9 780.6 L1825.5 783.7 L1826.0 785.7 L1826.6 787.8 L1827.1 790.3 L1827.7 792.0 L1828.2 794.5 L1828.8 796.3 L1829.3 797.8 L1829.9 799.4 L1830.4 801.2 L1831.0 802.9 L1831.6 804.6 L1832.1 806.1 L1832.6 810.1 L1833.1 813.7 L1833.7 817.5 L1834.2 821.7 L1834.7 825.2 L1835.2 829.3 L1835.7 831.4 L1836.2 833.4 L1836.7 834.9 L1837.3 836.8 L1837.8 839.0 L1838.3 840.9 L1838.9 842.1 L1839.5 843.7 L1840.0 844.6 L1840.6 845.8 L1841.2 847.4 L1841.8 848.6 L1842.3 849.7 L1842.8 851.5 L1843.3 852.3 L1843.8 853.8 L1844.4 855.0 L1844.9 856.4 L1845.4 857.2 L1846.0 857.9 L1846.5 858.2 L1847.0 859.0 L1847.6 859.5 L1848.1 857.4 L1848.7 855.2 L1849.2 853.2 L1849.8 850.9 L1850.3 848.6 L1850.9 842.0 L1851.5 834.9 L1852.0 828.2 L1852.6 821.5 L1853.1 813.0 L1853.6 803.8 L1854.1 795.3 L1854.6 786.7 L1855.1 766.5 L1855.6 747.1 L1856.1 724.8 L1856.6 731.6 L1857.1 735.7 L1857.6 744.1 L1858.2 725.4 L1858.7 708.9 L1859.2 686.1 L1859.7 675.7 L1860.2 661.0 L1860.7 651.3 L1861.3 672.2 L1861.9 686.1 L1862.5 649.7 L1863.1 610.6 L1863.6 651.6 L1864.2 686.1 L1864.7 682.0 L1865.3 668.5 L1865.8 662.9 L1866.4 682.8 L1866.9 709.3 L1867.5 689.1 L1868.0 678.7 L1868.5 659.0 L1869.1 644.6 L1869.6 635.8 L1870.0 662.9 L1870.5 649.7 L1871.0 636.1 L1871.5 618.4 L1872.1 632.7 L1872.6 643.2 L1873.1 659.0 L1873.6 650.4 L1874.1 642.7 L1874.6 631.9 L1875.2 642.5 L1875.7 647.3 L1876.2 659.0 L1876.7 667.2 L1877.2 675.6 L1877.7 678.4 L1878.3 686.4 L1878.9 696.3 L1879.5 704.5 L1880.1 709.3 L1880.6 715.3 L1881.2 725.7 L1881.8 733.2 L1882.4 740.3 L1883.0 743.7 L1883.5 749.7 L1884.1 754.5 L1884.7 759.6 L1885.2 758.6 L1885.8 758.5 L1886.3 759.7 L1886.9 760.6 L1887.4 759.6 L1888.0 763.1 L1888.5 767.7 L1889.0 770.9 L1889.6 774.5 L1890.1 779.0 L1890.6 781.1 L1891.2 784.6 L1891.7 787.1 L1892.2 789.0 L1892.7 791.7 L1893.2 794.5 L1893.7 797.5 L1894.3 800.3 L1894.8 802.9 L1895.3 806.0 L1895.8 808.9 L1896.3 811.9 L1896.9 813.4 L1897.4 814.9 L1898.0 816.0 L1898.5 817.4 L1899.1 819.0 L1899.6 820.1 L1900.2 821.5 L1900.7 823.6 L1901.3 825.8 L1901.8 828.3 L1902.4 830.5 L1903.0 832.7 L1903.5 834.7 L1904.1 837.0 L1904.6 838.4 L1905.1 839.7 L1905.6 840.9 L1906.1 842.4 L1906.6 843.7 L1907.2 844.8 L1907.7 828.0 L1908.3 811.9 L1908.9 824.3 L1909.5 837.0 L1910.0 837.7 L1910.4 837.9 L1910.9 838.6 L1911.4 839.0 L1911.9 834.5 L1912.4 830.5 L1912.9 826.1 L1913.3 821.5 L1913.8 812.7 L1914.3 804.2 L1914.8 795.4 L1915.3 786.7 L1915.8 779.3 L1916.2 771.1 L1916.7 763.2 L1917.2 755.8 L1917.7 745.7 L1918.2 734.2 L1918.7 724.3 L1919.1 713.2 L1919.6 705.6 L1920.1 697.1 L1920.6 686.8 L1921.1 682.2 L1921.6 672.4 L1922.1 666.3 L1922.6 655.1 L1923.2 673.3 L1923.8 686.1 L1924.4 654.4 L1925.0 619.5 L1925.5 655.1 L1926.1 695.8 L1926.7 665.9 L1927.3 639.7 L1927.8 654.1 L1928.3 663.5 L1928.8 674.5 L1929.3 660.4 L1929.9 649.3 L1930.4 631.9 L1930.9 643.9 L1931.4 656.1 L1931.9 668.7 L1932.4 656.8 L1933.0 644.6 L1933.5 637.7 L1934.0 646.6 L1934.5 656.6 L1935.0 662.9 L1935.5 656.4 L1936.0 643.2 L1936.6 637.7 L1937.1 645.2 L1937.6 652.6 L1938.1 662.9 L1938.7 665.8 L1939.3 671.5 L1939.9 677.5 L1940.4 682.2 L1940.9 689.9 L1941.5 695.4 L1942.0 701.5 L1942.5 705.0 L1943.0 712.7 L1943.5 717.1 L1944.0 722.8 L1944.6 726.3 L1945.1 728.0 L1945.6 734.2 L1946.1 738.0 L1946.6 740.3 L1947.2 743.1 L1947.7 748.3 L1948.3 749.8 L1948.8 752.4 L1949.4 758.2 L1949.9 759.2 L1950.5 763.5 L1951.0 766.3 L1951.6 770.5 L1952.2 774.0 L1952.7 777.2 L1953.3 779.7 L1953.8 783.8 L1954.4 786.7 L1954.9 788.5 L1955.5 791.5 L1956.0 793.7 L1956.6 795.4 L1957.1 797.4 L1957.7 800.3 L1958.2 802.2 L1958.8 804.8 L1959.4 807.2 L1960.0 809.3 L1960.6 811.9 L1961.1 814.1 L1961.7 816.7 L1962.3 819.4 L1962.9 821.5 L1963.4 823.5 L1964.0 825.6 L1964.5 827.6 L1965.1 829.2 L1965.6 831.1 L1966.2 833.3 L1966.7 835.1 L1967.3 836.3 L1967.8 837.8 L1968.4 839.1 L1968.9 840.4 L1969.5 842.1 L1969.9 837.2 L1970.4 833.0 L1970.9 828.2 L1971.4 823.5 L1971.9 824.2 L1972.4 825.5 L1972.8 826.3 L1973.3 827.4 L1973.8 825.1 L1974.3 822.5 L1974.8 820.2 L1975.3 817.7 L1975.8 811.2 L1976.4 804.1 L1977.0 797.6 L1977.6 790.6 L1978.2 785.4 L1978.7 781.4 L1979.3 776.2 L1979.9 771.2 L1980.4 760.4 L1980.9 750.0 L1981.5 740.3 L1982.0 724.3 L1982.6 705.4 L1983.2 713.0 L1983.8 720.9 L1984.3 708.0 L1984.8 700.8 L1985.3 686.1 L1985.8 679.0 L1986.4 678.3 L1986.9 670.6 L1987.4 674.1 L1987.9 680.2 L1988.4 682.2 L1988.9 676.4 L1989.5 666.6 L1990.0 662.9 L1990.5 659.7 L1991.0 655.4 L1991.5 653.2 L1992.0 660.3 L1992.5 671.5 L1993.1 682.2 L1993.6 677.7 L1994.1 664.0 L1994.6 659.0 L1995.1 665.6 L1995.6 670.7 L1996.2 674.5 L1996.7 664.4 L1997.3 647.4 L1998.1 628.8 L1998.7 653.4 L1999.3 682.2 L1999.8 682.7 L2000.4 688.5 L2001.0 690.9 L2001.6 697.7 L2002.1 704.4 L2002.6 704.2 L2003.1 710.1 L2003.6 718.6 L2004.2 720.8 L2004.7 724.8 L2005.2 727.4 L2005.8 732.6 L2006.3 735.0 L2006.9 738.1 L2007.4 742.1 L2008.0 745.6 L2008.5 748.0 L2009.1 750.7 L2009.7 753.0 L2010.2 753.7 L2010.8 757.8 L2011.3 760.1 L2011.9 761.3 L2012.4 763.5 L2013.0 765.6 L2013.6 765.0 L2014.2 766.3 L2014.7 768.9 L2015.3 770.1 L2015.9 770.6 L2016.5 771.2 L2017.1 773.2 L2017.6 775.2 L2018.2 775.4 L2018.7 777.0 L2019.3 778.7 L2019.8 779.8 L2020.4 780.9 L2020.9 782.8 L2021.5 786.5 L2022.0 788.9 L2022.6 791.9 L2023.1 795.6 L2023.6 798.3 L2024.2 819.8 L2024.8 840.9 L2025.4 868.2 L2026.0 895.1 L2026.5 905.9 L2027.0 916.4 L2027.5 926.8 L2028.0 924.7 L2028.5 922.7 L2029.0 920.3 L2029.4 918.3 L2030.0 917.1 L2030.6 916.6 L2031.2 915.2 L2031.8 914.4 L2032.3 910.4 L2032.9 906.5 L2033.5 902.6 L2034.1 898.9 L2034.7 898.3 L2035.2 898.2 L2035.8 897.6 L2036.4 897.0 L2037.0 896.6 L2037.6 896.2 L2038.2 895.3 L2038.7 895.1 L2039.2 896.5 L2039.8 897.4 L2040.3 898.9 L2040.8 897.2 L2041.2 895.0 L2041.7 893.3 L2042.2 891.2 L2042.8 888.8 L2043.3 886.7 L2043.8 884.2 L2044.4 881.6 L2044.9 879.6 L2045.5 876.7 L2046.1 873.5 L2046.7 871.0 L2047.2 868.0 L2047.8 857.4 L2048.3 847.1 L2048.8 837.0 L2049.3 827.8 L2049.8 818.7 L2050.3 809.9 L2050.9 804.8 L2051.4 799.4 L2051.9 794.5 L2052.4 784.8 L2052.9 773.7 L2053.4 763.5 L2054.0 749.6 L2054.5 736.3 L2055.0 724.8 L2055.6 715.4 L2056.1 707.4 L2056.7 732.1 L2057.3 753.8 L2057.9 741.3 L2058.5 724.8 L2059.0 723.7 L2059.4 721.4 L2059.9 722.5 L2060.4 722.9 L2061.0 753.6 L2061.6 786.7 L2062.3 892.0 L2062.9 881.9 L2063.5 871.9 L2064.0 867.8 L2064.5 863.7 L2064.9 859.5 L2065.4 855.2 L2065.9 858.3 L2066.4 861.7 L2066.9 865.1 L2067.4 868.0 L2067.9 870.4 L2068.5 872.9 L2069.1 875.0 L2069.7 877.7 L2070.2 878.8 L2070.7 879.8 L2071.2 880.8 L2071.8 881.6 L2072.3 882.7 L2072.8 883.5 L2073.3 884.2 L2073.8 884.9 L2074.3 885.2 L2074.9 885.9 L2075.4 886.4 L2075.9 887.3 L2076.4 888.1 L2076.9 888.6 L2077.4 889.2 L2077.9 890.0 L2078.5 890.9 L2079.0 891.2 L2079.5 892.4 L2080.0 893.2 L2080.5 894.1 L2081.0 895.4 L2081.6 896.1 L2082.1 897.0 L2082.6 898.1 L2083.1 899.2 L2083.6 899.8 L2084.1 901.0 L2084.7 901.6 L2085.2 902.8 L2085.7 903.5 L2086.3 904.2 L2086.8 905.4 L2087.3 906.2 L2087.9 906.7 L2088.4 905.2 L2089.0 903.4 L2089.5 901.9 L2090.0 900.7 L2090.6 898.9 L2091.2 900.2 L2091.7 901.2 L2092.3 901.7 L2092.9 902.8 L2093.4 904.2 L2093.9 905.8 L2094.4 906.9 L2094.8 908.6 L2095.3 902.3 L2095.8 896.1 L2096.3 889.8 L2096.8 883.5 L2097.4 882.7 L2097.9 881.6 L2098.5 880.6 L2099.1 879.6 L2099.6 874.9 L2100.1 870.1 L2100.6 865.2 L2101.0 860.2 L2101.6 847.2 L2102.1 834.5 L2102.6 821.5 L2103.1 811.2 L2103.6 801.2 L2104.1 790.6 L2104.6 779.8 L2105.2 769.4 L2105.7 759.6 L2106.3 769.5 L2106.8 780.9 L2107.4 752.8 L2108.0 724.8 L2108.6 738.1 L2109.2 748.0 L2109.7 714.0 L2110.3 682.2 L2110.9 718.9 L2111.5 755.8 L2112.0 739.1 L2112.5 723.6 L2113.0 709.3 L2113.6 720.9 L2114.1 736.6 L2114.6 751.9 L2115.1 734.2 L2115.6 714.8 L2116.1 697.7 L2116.6 689.1 L2117.2 682.1 L2117.7 673.7 L2118.2 694.1 L2118.7 715.4 L2119.2 736.4 L2119.7 720.8 L2120.3 699.1 L2120.8 682.2 L2121.3 696.3 L2121.8 717.0 L2122.3 732.5 L2122.8 720.3 L2123.4 704.0 L2123.9 690.0 L2124.4 701.8 L2124.9 711.2 L2125.4 724.8 L2125.9 729.3 L2126.4 734.2 L2127.0 736.4 L2127.5 743.6 L2128.1 754.6 L2128.7 763.6 L2129.3 771.2 L2129.8 775.9 L2130.3 781.3 L2130.8 787.1 L2131.4 792.2 L2131.9 797.3 L2132.4 802.2 L2132.9 805.4 L2133.5 809.0 L2134.0 812.4 L2134.6 815.3 L2135.1 819.0 L2135.7 822.0 L2136.3 825.4 L2136.8 827.1 L2137.3 829.1 L2137.9 831.2 L2138.4 833.0 L2139.0 835.1 L2139.4 837.5 L2139.9 840.1 L2140.4 842.6 L2140.9 844.8 L2141.5 847.7 L2142.0 850.2 L2142.6 853.3 L2143.1 855.8 L2143.7 858.6 L2144.2 861.6 L2144.8 864.1 L2145.3 867.1 L2145.9 869.9 L2146.4 872.3 L2147.0 875.1 L2147.5 877.8 L2148.1 880.9 L2148.6 883.5 L2149.2 885.0 L2149.7 886.2 L2150.3 887.9 L2150.8 889.2 L2151.4 890.6 L2152.0 891.8 L2152.5 893.1 L2153.1 893.9 L2153.7 894.8 L2154.2 896.2 L2154.8 897.0 L2155.4 891.0 L2156.0 885.4 L2156.6 891.6 L2157.2 898.2 L2157.7 891.8 L2158.2 886.0 L2158.7 879.6 L2159.3 876.8 L2159.9 874.0 L2160.4 870.6 L2161.0 868.0 L2161.6 865.4 L2162.2 862.4 L2162.8 859.2 L2163.3 856.4 L2163.8 846.9 L2164.3 837.3 L2164.8 827.6 L2165.3 817.7 L2165.8 809.9 L2166.2 802.5 L2166.7 794.9 L2167.2 786.7 L2167.7 778.7 L2168.2 771.1 L2168.8 763.5 L2169.3 751.8 L2169.8 738.1 L2170.3 724.8 L2170.9 718.8 L2171.5 717.1 L2172.1 706.5 L2172.6 693.8 L2173.1 712.9 L2173.7 731.8 L2174.2 748.0 L2174.7 739.1 L2175.2 729.6 L2175.7 717.1 L2176.2 705.7 L2176.8 694.1 L2177.3 680.3 L2177.8 697.9 L2178.3 709.6 L2178.8 724.8 L2179.3 712.4 L2179.9 700.0 L2180.4 686.1 L2181.0 679.2 L2181.5 671.4 L2182.1 699.6 L2182.7 720.9 L2183.3 706.3 L2183.9 697.7 L2184.4 708.5 L2185.0 724.8 L2185.5 733.0 L2186.0 742.1 L2186.6 751.9 L2187.1 755.7 L2187.7 760.6 L2188.3 767.0 L2188.9 771.2 L2189.5 779.3 L2190.0 786.7 L2190.6 794.7 L2191.2 802.2 L2191.7 807.2 L2192.2 812.3 L2192.8 817.6 L2193.3 822.7 L2193.8 828.1 L2194.3 833.2 L2194.8 837.8 L2195.3 842.2 L2195.9 846.5 L2196.4 851.0 L2196.9 855.6 L2197.4 860.2 L2198.0 863.7 L2198.5 866.7 L2199.1 870.3 L2199.6 873.7 L2200.2 876.8 L2200.7 880.0 L2201.3 883.5 L2201.8 886.4 L2202.4 888.9 L2202.9 892.1 L2203.5 894.6 L2204.0 897.5 L2204.6 900.3 L2205.1 902.8 L2205.7 905.2 L2206.2 907.3 L2206.8 909.2 L2207.4 911.8 L2207.9 913.7 L2208.5 916.0 L2209.0 918.3 L2209.6 920.0 L2210.1 921.6 L2210.7 923.0 L2211.2 925.1 L2211.8 926.6 L2212.3 928.3 L2212.9 929.9 L2213.4 933.1 L2214.0 935.9 L2214.5 939.4 L2215.0 942.3 L2215.6 945.4 L2216.1 947.6 L2216.7 949.1 L2217.2 951.1 L2217.8 953.4 L2218.3 955.1 L2218.9 956.3 L2219.4 957.9 L2220.0 959.7 L2220.5 960.9 L2221.1 962.3 L2221.6 963.8 L2222.2 965.5 L2222.7 963.9 L2223.3 962.2 L2223.8 960.6 L2224.3 958.8 L2224.9 957.0 L2225.4 943.9 L2225.9 931.1 L2226.4 918.3 L2226.9 894.8 L2227.5 872.0 L2228.0 848.6 L2228.5 844.8 L2229.0 840.9 L2229.5 837.0 L2230.0 840.2 L2230.6 843.2 L2231.1 846.7 L2231.6 836.8 L2232.1 827.3 L2232.6 817.7 L2233.1 822.6 L2233.6 828.0 L2234.2 833.2 L2234.7 821.3 L2235.2 810.1 L2235.7 798.3 L2236.2 789.2 L2236.7 780.3 L2237.3 771.2 L2237.8 781.0 L2238.3 792.0 L2238.8 802.2 L2239.3 792.9 L2239.8 783.7 L2240.4 775.1 L2240.9 781.3 L2241.5 786.7 L2242.0 775.0 L2242.5 762.2 L2243.1 750.0 L2243.6 759.8 L2244.1 770.1 L2244.6 779.0 L2245.1 770.7 L2245.6 761.7 L2246.2 753.8 L2246.7 761.1 L2247.2 771.5 L2247.7 779.0 L2248.2 770.5 L2248.7 760.3 L2249.3 751.9 L2249.8 763.6 L2250.3 774.6 L2250.8 786.7 L2251.3 785.6 L2251.8 784.5 L2252.4 782.8 L2252.8 791.3 L2253.3 800.3 L2253.8 809.1 L2254.3 817.7 L2254.8 829.4 L2255.3 840.8 L2255.7 852.7 L2256.2 864.1 L2256.7 872.6 L2257.2 881.6 L2257.7 890.5 L2258.2 898.9 L2258.7 900.6 L2259.2 902.6 L2259.8 904.7 L2260.3 906.8 L2260.9 908.6 L2261.4 909.2 L2262.0 909.5 L2262.6 910.0 L2263.2 910.6 L2263.8 916.6 L2264.3 922.1 L2264.9 928.1 L2265.5 933.8 L2266.1 936.3 L2266.7 938.3 L2267.3 941.3 L2267.8 943.5 L2268.3 941.8 L2268.8 940.8 L2269.3 939.0 L2269.8 937.6 L2270.3 941.4 L2270.7 945.2 L2271.2 949.2 L2271.7 953.1 L2272.2 951.7 L2272.7 950.3 L2273.2 949.0 L2273.6 947.3 L2274.1 950.4 L2274.6 953.9 L2275.1 957.3 L2275.6 960.9 L2276.2 962.9 L2276.7 965.0 L2277.3 966.5 L2277.9 968.6 L2278.5 970.4 L2279.1 972.2 L2279.6 974.4 L2280.2 976.3 L2280.7 973.7 L2281.2 971.7 L2281.7 969.2 L2282.2 966.7 L2282.7 970.1 L2283.2 973.2 L2283.7 976.3 L2284.2 970.1 L2284.7 963.2 L2285.2 957.0 L2285.8 950.6 L2286.3 943.9 L2286.8 937.6 L2287.3 931.2 L2287.8 924.7 L2288.3 918.3 L2288.9 889.2 L2289.5 860.2 L2290.1 831.0 L2290.7 802.2 L2291.2 764.9 L2291.8 728.7 L2292.4 761.2 L2293.0 794.5 L2293.5 780.8 L2294.0 766.7 L2294.5 751.9 L2295.1 769.1 L2295.7 784.8 L2296.3 793.8 L2296.9 802.2 L2297.4 773.4 L2298.0 744.1 L2298.5 747.8 L2299.1 755.9 L2299.6 759.6 L2300.1 748.6 L2300.6 737.8 L2301.1 726.7 L2301.6 733.8 L2302.1 739.7 L2302.7 744.1 L2303.2 739.5 L2303.7 737.0 L2304.2 730.6 L2304.7 735.4 L2305.2 739.3 L2305.8 744.1 L2306.3 739.8 L2306.8 737.9 L2307.3 732.5 L2307.8 738.7 L2308.3 743.5 L2308.9 748.0 L2309.4 743.9 L2309.9 740.1 L2310.4 736.4 L2310.9 740.5 L2311.4 745.0 L2312.0 751.9 L2312.5 748.8 L2313.0 744.3 L2313.5 740.3 L2314.0 744.1 L2314.5 747.9 L2315.0 753.8 L2315.6 758.3 L2316.1 759.4 L2316.6 763.5 L2317.1 776.8 L2317.6 788.8 L2318.1 802.2 L2318.6 809.7 L2319.1 817.4 L2319.6 825.7 L2320.1 833.2 L2320.6 835.1 L2321.2 837.0 L2321.7 839.2 L2322.2 841.2 L2322.8 842.8 L2323.3 843.9 L2323.8 844.5 L2324.3 846.0 L2324.9 846.4 L2325.4 847.8 L2325.9 848.6 L2326.4 851.1 L2327.0 854.0 L2327.5 856.9 L2328.1 859.8 L2328.6 862.7 L2329.2 865.4 L2329.8 868.0 L2330.3 870.3 L2330.9 872.4 L2331.4 874.6 L2332.0 877.1 L2332.5 879.2 L2333.1 881.5 L2333.6 883.5 L2334.2 886.0 L2334.7 889.2 L2335.3 891.5 L2335.8 894.4 L2336.4 897.3 L2336.9 899.8 L2337.5 902.8 L2338.0 905.2 L2338.5 908.1 L2339.0 910.8 L2339.6 912.9 L2340.1 916.0 L2340.6 918.3 L2341.2 923.2 L2341.7 927.8 L2342.3 932.9 L2342.9 937.6 L2343.5 942.2 L2344.1 946.2 L2344.6 939.3 L2345.1 932.7 L2345.6 926.0 L2346.2 929.7 L2346.8 933.8 L2347.3 929.5 L2347.8 924.9 L2348.3 920.2 L2348.8 916.7 L2349.4 913.6 L2349.9 910.6 L2350.4 904.3 L2350.9 897.8 L2351.4 891.2 L2351.9 880.8 L2352.5 870.4 L2353.0 860.2 L2353.5 851.3 L2354.0 842.3 L2354.5 833.2 L2355.0 825.3 L2355.6 817.5 L2356.1 809.9 L2356.6 802.4 L2357.1 794.2 L2357.6 786.7 L2358.1 782.0 L2358.6 776.1 L2359.2 771.2 L2359.7 765.3 L2360.2 759.8 L2360.7 755.8 L2361.2 759.1 L2361.7 763.7 L2362.3 767.4 L2362.8 759.7 L2363.3 753.3 L2363.8 744.1 L2364.3 747.6 L2364.8 750.0 L2365.4 751.9 L2365.9 741.3 L2366.4 735.4 L2366.9 724.8 L2367.4 720.5 L2367.9 711.7 L2368.5 703.5 L2369.0 722.8 L2369.6 740.3 L2370.2 718.4 L2370.8 701.6 L2371.4 725.3 L2371.9 750.0 L2372.5 735.7 L2373.1 724.8 L2373.6 735.0 L2374.1 743.6 L2374.6 751.9 L2375.2 763.6 L2375.7 775.4 L2376.2 786.7 L2376.8 794.5 L2377.4 802.5 L2377.9 810.1 L2378.5 817.7 L2379.0 822.4 L2379.5 826.6 L2380.1 831.1 L2380.6 835.9 L2381.1 840.5 L2381.6 844.8 L2382.1 848.0 L2382.6 851.0 L2383.2 854.4 L2383.7 857.5 L2384.2 860.9 L2384.7 864.1 L2385.3 867.4 L2385.8 870.6 L2386.4 874.1 L2386.9 877.6 L2387.5 880.7 L2388.0 884.0 L2388.6 887.3 L2389.1 890.4 L2389.7 893.7 L2390.2 897.1 L2390.8 900.7 L2391.3 903.6 L2391.9 907.3 L2392.4 910.6 L2393.0 913.6 L2393.6 915.9 L2394.1 918.8 L2394.7 921.3 L2395.2 924.3 L2395.8 927.0 L2396.3 929.9 L2396.9 931.9 L2397.4 933.9 L2398.0 935.9 L2398.5 937.4 L2399.1 939.4 L2399.6 941.2 L2400.2 943.5 L2400.7 944.8 L2401.2 945.7 L2401.7 947.1 L2402.2 948.5 L2402.8 949.9 L2403.3 951.2 L2403.8 952.7 L2404.3 954.0 L2404.8 955.8 L2405.4 952.3 L2406.0 948.9 L2406.6 944.9 L2407.2 941.5 L2407.6 937.7 L2408.1 933.8 L2408.6 930.1 L2409.1 926.0 L2409.6 925.1 L2410.1 924.2 L2410.5 923.0 L2411.0 922.2 L2411.5 918.4 L2412.0 914.7 L2412.5 910.3 L2413.0 906.7 L2413.4 900.2 L2413.9 893.2 L2414.4 886.5 L2414.9 879.6 L2415.4 872.0 L2415.9 864.3 L2416.4 856.4 L2417.0 844.8 L2417.5 833.3 L2418.0 821.5 L2418.5 815.4 L2419.0 808.4 L2419.5 802.2 L2420.1 793.6 L2420.6 783.6 L2421.1 775.1 L2421.6 770.5 L2422.1 764.3 L2422.6 759.6 L2423.1 756.3 L2423.7 753.8 L2424.2 751.9 L2424.7 744.2 L2425.2 738.1 L2425.7 730.6 L2426.2 740.4 L2426.8 753.3 L2427.3 763.5 L2427.9 771.9 L2428.4 780.9 L2429.0 768.4 L2429.6 755.8 L2430.1 750.3 L2430.6 744.3 L2431.1 736.4 L2431.7 742.9 L2432.2 747.9 L2432.7 755.8 L2433.2 750.8 L2433.7 743.9 L2434.2 736.4 L2434.8 734.6 L2435.3 728.1 L2435.8 724.8 L2436.3 734.8 L2436.8 746.0 L2437.3 755.8 L2437.9 761.6 L2438.4 765.1 L2438.9 771.2 L2439.5 776.2 L2440.0 781.3 L2440.6 785.3 L2441.2 790.6 L2441.7 792.4 L2442.2 794.9 L2442.8 796.6 L2443.3 798.0 L2443.8 800.1 L2444.3 802.2 L2444.8 806.1 L2445.3 809.7 L2445.9 813.8 L2446.4 817.8 L2446.9 821.6 L2447.4 825.4 L2447.9 828.0 L2448.4 830.5 L2448.9 833.2 L2449.5 836.0 L2450.0 838.5 L2450.5 840.9 L2451.0 843.2 L2451.6 845.3 L2452.2 847.3 L2452.7 849.8 L2453.3 851.8 L2453.8 854.1 L2454.4 856.4 L2454.9 857.4 L2455.5 858.5 L2456.0 859.8 L2456.6 861.0 L2457.1 861.7 L2457.7 862.7 L2458.2 864.1 L2458.8 866.6 L2459.3 868.4 L2459.9 870.6 L2460.4 872.8 L2461.0 875.1 L2461.6 877.5 L2462.1 879.6 L2462.7 881.3 L2463.2 883.1 L2463.8 884.6 L2464.3 886.5 L2464.9 887.7 L2465.4 889.8 L2466.0 891.2 L2466.6 892.1 L2467.1 893.2 L2467.7 894.3 L2468.3 895.1 L2468.8 882.9 L2469.3 870.4 L2469.8 858.3 L2470.3 858.1 L2470.8 857.2 L2471.3 857.0 L2471.8 856.4 L2472.3 858.0 L2472.7 859.5 L2473.2 861.0 L2473.7 862.2 L2474.2 858.6 L2474.7 855.6 L2475.2 851.9 L2475.7 848.6 L2476.2 834.9 L2476.8 821.5 L2477.3 826.9 L2477.8 831.8 L2478.4 837.0 L2478.9 830.8 L2479.4 824.2 L2479.9 817.7 L2480.4 810.1 L2480.9 802.3 L2481.5 794.5 L2482.0 786.5 L2482.5 778.3 L2483.0 771.2 L2483.5 759.3 L2484.0 747.5 L2484.6 736.4 L2485.1 741.2 L2485.6 750.9 L2486.1 755.8 L2486.6 744.5 L2487.1 735.5 L2487.6 724.8 L2488.2 727.6 L2488.7 733.3 L2489.2 740.3 L2489.7 730.0 L2490.2 720.6 L2490.7 713.2 L2491.3 719.6 L2491.8 719.7 L2492.3 724.8 L2492.8 716.9 L2493.3 712.0 L2493.8 705.4 L2494.4 707.6 L2494.9 718.1 L2495.4 720.9 L2495.9 716.9 L2496.4 712.9 L2496.9 709.3 L2497.5 705.3 L2498.0 700.9 L2498.5 692.7 L2499.1 711.9 L2499.6 736.4 L2500.1 742.8 L2500.6 746.6 L2501.1 752.5 L2501.6 759.6 L2502.1 764.5 L2502.6 769.6 L2503.1 772.3 L2503.6 777.1 L2504.2 782.8 L2504.7 786.7 L2505.2 789.9 L2505.8 792.9 L2506.3 797.1 L2506.9 800.2 L2507.4 803.5 L2508.0 806.9 L2508.5 809.9 L2509.1 810.7 L2509.7 811.6 L2510.2 812.2 L2510.8 813.1 L2511.3 814.0 L2511.9 814.9 L2512.4 815.7 L2513.0 818.1 L2513.5 820.6 L2514.1 823.3 L2514.6 826.0 L2515.2 828.1 L2515.7 830.4 L2516.3 833.2 L2516.8 835.2 L2517.4 837.9 L2517.9 839.5 L2518.5 841.7 L2519.0 844.0 L2519.6 846.5 L2520.2 848.6 L2520.7 851.1 L2521.3 852.8 L2521.8 855.5 L2522.4 857.6 L2522.9 859.5 L2523.5 862.1 L2524.0 864.1 L2524.6 866.6 L2525.1 868.4 L2525.7 870.8 L2526.2 872.8 L2526.8 874.9 L2527.3 877.7 L2527.9 879.6 L2528.4 880.6 L2528.9 882.1 L2529.4 883.0 L2530.0 884.1 L2530.5 885.2 L2531.0 886.6 L2531.5 874.0 L2532.0 861.3 L2532.5 848.6 L2533.1 853.7 L2533.6 859.2 L2534.1 864.1 L2534.7 863.0 L2535.2 862.1 L2535.8 861.0 L2536.4 860.2 L2537.0 853.7 L2537.6 846.4 L2538.2 839.6 L2538.7 833.2 L2539.2 827.9 L2539.8 822.7 L2540.3 817.7 L2540.8 812.3 L2541.3 807.1 L2541.8 802.2" fill="none" stroke="#068c45" stroke-width="1.7" stroke-linejoin="round"/></svg>
<div class="t " style="right:42.5px;top:146.9px;font-size:16.00px;color:#4353a4;">Temp-avg FFT (day)</div>
<div class="t " style="right:36.0px;top:581.8px;font-size:15.80px;color:#068c45;">Temp-avg (°F)</div>
<div class="t " style="right:1918.0px;top:615.3px;font-size:14.40px;color:#068c45;">20</div>
<div class="t " style="right:1918.0px;top:702.8px;font-size:14.40px;color:#068c45;">10</div>
<div class="t " style="right:1918.0px;top:790.3px;font-size:14.40px;color:#068c45;">0</div>
<div class="t " style="right:1918.0px;top:877.8px;font-size:14.40px;color:#068c45;">−10</div>
<div class="t " style="right:1918.0px;top:965.3px;font-size:14.40px;color:#068c45;">−20</div>
<div class="t " style="left:690.1px;transform:translateX(-50%);top:1005.8px;font-size:14.40px;color:#999;">Oct 2</div>
<div class="t " style="left:814.7px;transform:translateX(-50%);top:1005.8px;font-size:14.40px;color:#999;">Oct 4</div>
<div class="t " style="left:939.4px;transform:translateX(-50%);top:1005.8px;font-size:14.40px;color:#999;">Oct 6</div>
<div class="t " style="left:1064.0px;transform:translateX(-50%);top:1005.8px;font-size:14.40px;color:#999;">Oct 8</div>
<div class="t " style="left:1188.7px;transform:translateX(-50%);top:1005.8px;font-size:14.40px;color:#999;">Oct 10</div>
<div class="t " style="left:1313.3px;transform:translateX(-50%);top:1005.8px;font-size:14.40px;color:#999;">Oct 12</div>
<div class="t " style="left:1437.9px;transform:translateX(-50%);top:1005.8px;font-size:14.40px;color:#999;">Oct 14</div>
<div class="t " style="left:1562.6px;transform:translateX(-50%);top:1005.8px;font-size:14.40px;color:#999;">Oct 16</div>
<div class="t " style="left:1687.2px;transform:translateX(-50%);top:1005.8px;font-size:14.40px;color:#999;">Oct 18</div>
<div class="t " style="left:1811.9px;transform:translateX(-50%);top:1005.8px;font-size:14.40px;color:#999;">Oct 20</div>
<div class="t " style="left:1936.5px;transform:translateX(-50%);top:1005.8px;font-size:14.40px;color:#999;">Oct 22</div>
<div class="t " style="left:2061.1px;transform:translateX(-50%);top:1005.8px;font-size:14.40px;color:#999;">Oct 24</div>
<div class="t " style="left:2185.8px;transform:translateX(-50%);top:1005.8px;font-size:14.40px;color:#999;">Oct 26</div>
<div class="t " style="left:2310.4px;transform:translateX(-50%);top:1005.8px;font-size:14.40px;color:#999;">Oct 28</div>
<div class="t " style="left:2435.1px;transform:translateX(-50%);top:1005.8px;font-size:14.40px;color:#999;">Oct 30</div>
<svg class="a" style="left:624.2px;top:1030.0px;" width="12.4" height="17.0" viewBox="0 0 12.4 17"><path d="M6.2 0 V13" stroke="#007960" stroke-width="2.6"/><path d="M0.4 9.6 L6.2 16.8 L12 9.6 L10.2 8 L6.2 12.8 L2.2 8 Z" fill="#007960"/></svg>
<div class="t " style="left:647.0px;top:1031.9px;font-size:13.20px;color:#11806a;">10/1/2018 7:11 AM <span class="u">EDT</span></div>
<div class="t " style="right:17.0px;top:1031.9px;font-size:13.20px;color:#11806a;">10/31/2018 5:11 PM <span class="u">EDT</span></div>
<svg class="a" style="left:1429.5px;top:1030.6px;" width="18.4" height="16.4" viewBox="0 0 18.4 16.4"><path d="M9.6 0 L0.2 8.2 L9.6 16.4 Z M18.2 0 L8.8 8.2 L18.2 16.4 Z" fill="#007960"/></svg>
<svg class="a" style="left:1466.2px;top:1030.6px;" width="10.4" height="16.4" viewBox="0 0 10.4 16.4"><path d="M10 0 L0.3 8.2 L10 16.4 Z" fill="#007960"/></svg>
<div class="t " style="left:1493.9px;top:1031.6px;font-size:14.00px;color:#11806a;">1 month</div>
<svg class="a" style="left:1563.5px;top:1030.6px;" width="10.4" height="16.4" viewBox="0 0 10.4 16.4"><path d="M0.4 0 L10.1 8.2 L0.4 16.4 Z" fill="#007960"/></svg>
<svg class="a" style="left:1591.4px;top:1030.6px;" width="18.4" height="16.4" viewBox="0 0 18.4 16.4"><path d="M0.2 0 L9.6 8.2 L0.2 16.4 Z M8.8 0 L18.2 8.2 L8.8 16.4 Z" fill="#007960"/></svg>
<svg class="a" style="left:1627.8px;top:1030.6px;" width="11.6" height="16.4" viewBox="0 0 11.6 16.4"><path d="M0.2 0 L9 8.2 L0.2 16.4 Z" fill="#007960"/><rect x="8.8" y="0" width="2.6" height="16.4" fill="#007960"/></svg>
<svg class="a" style="left:1659.6px;top:1032.6px;" width="13.0" height="12.6" viewBox="0 0 13 12.6"><path d="M1.6 5.2 A4.9 4.9 0 0 1 10.4 3.2" fill="none" stroke="#007960" stroke-width="2.1"/><path d="M12.6 0.4 V5.2 H7.8 Z" fill="#007960"/><path d="M11.4 7.4 A4.9 4.9 0 0 1 2.6 9.4" fill="none" stroke="#007960" stroke-width="2.1"/><path d="M0.4 12.2 V7.4 H5.2 Z" fill="#007960"/></svg>
<div class="a" style="left:614.0px;top:1054.0px;width:1944.0px;height:81.5px;background:#f5f5f5;border-top:1.5px solid #e6e6e6"></div>
<div class="a" style="left:644.0px;top:1064.2px;width:1870.0px;height:17.0px;background:#f4f4f4;border:2px solid #ccc;border-radius:0 4px 4px 0"></div>
<div class="a" style="left:644.0px;top:1064.0px;width:786.0px;height:17.4px;background:#fff;border-top:2.4px solid #007960;border-bottom:2.4px solid #007960"></div>
<div class="a" style="left:640.0px;top:1060.6px;width:6.4px;height:24.6px;background:#f5f5f5;border:1.7px solid #007960"></div>
<div class="a" style="left:1426.8px;top:1060.6px;width:6.4px;height:24.6px;background:#f5f5f5;border:1.7px solid #007960"></div>
<div class="a" style="left:790.9px;top:1082.0px;width:1.0px;height:2.6px;background:#ccc"></div>
<div class="t " style="left:791.4px;transform:translateX(-50%);top:1087.6px;font-size:11.60px;color:#999;">Oct 7</div>
<div class="a" style="left:971.3px;top:1082.0px;width:1.0px;height:2.6px;background:#ccc"></div>
<div class="t " style="left:971.8px;transform:translateX(-50%);top:1087.6px;font-size:11.60px;color:#999;">Oct 14</div>
<div class="a" style="left:1151.6px;top:1082.0px;width:1.0px;height:2.6px;background:#ccc"></div>
<div class="t " style="left:1152.1px;transform:translateX(-50%);top:1087.6px;font-size:11.60px;color:#999;">Oct 21</div>
<div class="a" style="left:1332.0px;top:1082.0px;width:1.0px;height:2.6px;background:#ccc"></div>
<div class="t " style="left:1332.5px;transform:translateX(-50%);top:1087.6px;font-size:11.60px;color:#999;">Oct 28</div>
<div class="a" style="left:1512.3px;top:1082.0px;width:1.0px;height:2.6px;background:#ccc"></div>
<div class="t " style="left:1512.8px;transform:translateX(-50%);top:1087.6px;font-size:11.60px;color:#999;">Nov 4</div>
<div class="a" style="left:1692.7px;top:1082.0px;width:1.0px;height:2.6px;background:#ccc"></div>
<div class="t " style="left:1693.2px;transform:translateX(-50%);top:1087.6px;font-size:11.60px;color:#999;">Nov 11</div>
<div class="a" style="left:1873.1px;top:1082.0px;width:1.0px;height:2.6px;background:#ccc"></div>
<div class="t " style="left:1873.6px;transform:translateX(-50%);top:1087.6px;font-size:11.60px;color:#999;">Nov 18</div>
<div class="a" style="left:2053.4px;top:1082.0px;width:1.0px;height:2.6px;background:#ccc"></div>
<div class="t " style="left:2053.9px;transform:translateX(-50%);top:1087.6px;font-size:11.60px;color:#999;">Nov 25</div>
<div class="a" style="left:2233.8px;top:1082.0px;width:1.0px;height:2.6px;background:#ccc"></div>
<div class="t " style="left:2234.3px;transform:translateX(-50%);top:1087.6px;font-size:11.60px;color:#999;">Dec 2</div>
<div class="a" style="left:2414.1px;top:1082.0px;width:1.0px;height:2.6px;background:#ccc"></div>
<div class="t " style="left:2414.6px;transform:translateX(-50%);top:1087.6px;font-size:11.60px;color:#999;">Dec 9</div>
<svg class="a" style="left:2524.0px;top:1064.4px;" width="15.4" height="18.6" viewBox="0 0 15.4 18.6"><rect x="0" y="0" width="15.4" height="18.6" fill="#007960"/><path d="M1.2 13.6 L3.8 3.2 L6.2 13.6 L7.7 8 L9.2 13.6 L11.6 3.2 L14.2 13.6" fill="none" stroke="#fff" stroke-width="1.5"/></svg>
<svg class="a" style="left:624.2px;top:1110.6px;" width="12.4" height="17.0" viewBox="0 0 12.4 17"><path d="M6.2 4 V17" stroke="#007960" stroke-width="2.6"/><path d="M0.4 7.4 L6.2 0.2 L12 7.4 L10.2 9 L6.2 4.2 L2.2 9 Z" fill="#007960"/></svg>
<div class="t " style="left:647.0px;top:1116.0px;font-size:13.80px;color:#11806a;">10/1/2018</div>
<div class="t " style="left:1591.8px;transform:translateX(-50%);top:1115.4px;font-size:14.00px;color:#11806a;">2.4 months</div>
<div class="t " style="right:20.3px;top:1115.5px;font-size:13.85px;color:#11806a;">12/12/2018</div>
<div class="a" style="left:614.0px;top:1135.2px;width:1944.0px;height:32.0px;background:#007960"></div>
<div class="a" style="left:614.0px;top:1167.2px;width:1944.0px;height:99.0px;background:#fff"></div>
<svg class="a" style="left:626.2px;top:1146.0px;" width="17.6" height="13.6" viewBox="0 0 17.6 13.6"><path d="M0.9 0 V12.7 H17.6" fill="none" stroke="#fff" stroke-width="1.8"/><path d="M3 11.2 V7.6 L6.8 2.8 L10.2 6.4 L13.4 3.4 L16.6 8.2 V11.2 Z" fill="#fff"/></svg>
<div class="t " style="left:648.9px;top:1145.5px;font-size:14.65px;color:#fff;">Details</div>
<div class="a" style="left:2458.4px;top:1139.4px;width:94.4px;height:25.8px;background:#fff;border-radius:4px"></div>
<svg class="a" style="left:2465.8px;top:1143.8px;" width="17.0" height="16.0" viewBox="0 0 17 16"><rect x="4.424" y="3.056" width="2.352" height="11.088" fill="#333" transform="rotate(0 5.6 8.6)"/><rect x="4.424" y="3.056" width="2.352" height="11.088" fill="#333" transform="rotate(45 5.6 8.6)"/><rect x="4.424" y="3.056" width="2.352" height="11.088" fill="#333" transform="rotate(90 5.6 8.6)"/><rect x="4.424" y="3.056" width="2.352" height="11.088" fill="#333" transform="rotate(135 5.6 8.6)"/><rect x="4.424" y="3.056" width="2.352" height="11.088" fill="#333" transform="rotate(180 5.6 8.6)"/><rect x="4.424" y="3.056" width="2.352" height="11.088" fill="#333" transform="rotate(225 5.6 8.6)"/><rect x="4.424" y="3.056" width="2.352" height="11.088" fill="#333" transform="rotate(270 5.6 8.6)"/><rect x="4.424" y="3.056" width="2.352" height="11.088" fill="#333" transform="rotate(315 5.6 8.6)"/><circle cx="5.6" cy="8.6" r="4.2" fill="#333"/><circle cx="5.6" cy="8.6" r="1.764" fill="#fff"/><rect x="12.756" y="0.564" width="1.288" height="6.072" fill="#333" transform="rotate(0 13.4 3.6)"/><rect x="12.756" y="0.564" width="1.288" height="6.072" fill="#333" transform="rotate(45 13.4 3.6)"/><rect x="12.756" y="0.564" width="1.288" height="6.072" fill="#333" transform="rotate(90 13.4 3.6)"/><rect x="12.756" y="0.564" width="1.288" height="6.072" fill="#333" transform="rotate(135 13.4 3.6)"/><rect x="12.756" y="0.564" width="1.288" height="6.072" fill="#333" transform="rotate(180 13.4 3.6)"/><rect x="12.756" y="0.564" width="1.288" height="6.072" fill="#333" transform="rotate(225 13.4 3.6)"/><rect x="12.756" y="0.564" width="1.288" height="6.072" fill="#333" transform="rotate(270 13.4 3.6)"/><rect x="12.756" y="0.564" width="1.288" height="6.072" fill="#333" transform="rotate(315 13.4 3.6)"/><circle cx="13.4" cy="3.6" r="2.3" fill="#333"/><circle cx="13.4" cy="3.6" r="0.966" fill="#fff"/><rect x="12.756" y="9.764" width="1.288" height="6.072" fill="#333" transform="rotate(0 13.4 12.8)"/><rect x="12.756" y="9.764" width="1.288" height="6.072" fill="#333" transform="rotate(45 13.4 12.8)"/><rect x="12.756" y="9.764" width="1.288" height="6.072" fill="#333" transform="rotate(90 13.4 12.8)"/><rect x="12.756" y="9.764" width="1.288" height="6.072" fill="#333" transform="rotate(135 13.4 12.8)"/><rect x="12.756" y="9.764" width="1.288" height="6.072" fill="#333" transform="rotate(180 13.4 12.8)"/><rect x="12.756" y="9.764" width="1.288" height="6.072" fill="#333" transform="rotate(225 13.4 12.8)"/><rect x="12.756" y="9.764" width="1.288" height="6.072" fill="#333" transform="rotate(270 13.4 12.8)"/><rect x="12.756" y="9.764" width="1.288" height="6.072" fill="#333" transform="rotate(315 13.4 12.8)"/><circle cx="13.4" cy="12.8" r="2.3" fill="#333"/><circle cx="13.4" cy="12.8" r="0.966" fill="#fff"/></svg>
<div class="t " style="left:2485.4px;top:1146.0px;font-size:12.65px;color:#333;">Customize</div>
<svg class="a" style="left:707.5px;top:1180.2px;" width="11.4" height="11.4" viewBox="0 0 11.4 11.4"><path d="M1.6 1.6 L9.8 9.8 M9.8 1.6 L1.6 9.8" stroke="#555" stroke-width="3" stroke-linecap="butt"/></svg>
<svg class="a" style="left:732.6px;top:1179.4px;" width="12.6" height="12.6" viewBox="0 0 12.6 12.6"><rect x="0.7" y="0.7" width="11.2" height="11.2" rx="2.2" fill="#fff" stroke="#555" stroke-width="1.3"/></svg>
<svg class="a" style="left:793.8px;top:1179.6px;" width="8.8" height="12.4" viewBox="0 0 8.8 12.4"><path d="M0 4.8 L4.4 0 L8.8 4.8 Z M0 7.6 L4.4 12.4 L8.8 7.6 Z" fill="#666"/></svg>
<div class="t b" style="left:812.2px;top:1179.1px;font-size:14.40px;color:#333;">Name</div>
<svg class="a" style="left:862.6px;top:1179.6px;" width="8.8" height="12.4" viewBox="0 0 8.8 12.4"><path d="M0 4.8 L4.4 0 L8.8 4.8 Z M0 7.6 L4.4 12.4 L8.8 7.6 Z" fill="#666"/></svg>
<div class="t " style="left:2341.6px;top:1179.0px;font-size:14.50px;color:#333;text-shadow:0 0 .5px #333">Assets</div>
<div class="t " style="left:2394.1px;top:1178.9px;font-size:14.80px;color:#11806a;text-shadow:0 0 .5px #11806a">Lane</div>
<svg class="a" style="left:2437.0px;top:1180.0px;" width="9.6" height="5.2" viewBox="0 0 9.6 5.2"><path d="M0 5.2 L4.8 0 L9.6 5.2 Z" fill="#007960"/></svg>
<svg class="a" style="left:2530.0px;top:1174.2px;" width="18.0" height="16.4" viewBox="0 0 18 16.4"><g fill="none" stroke="#444" stroke-width="1.1"><rect x="0.6" y="0.6" width="12" height="11.4"/><path d="M0.6 4.4 H12.6 M0.6 8.2 H12.6 M4.6 0.6 V12 M8.6 0.6 V12"/></g><circle cx="12.6" cy="11" r="5" fill="#222"/><path d="M9.8 11 H15.4 M12.6 8.2 V13.8" stroke="#fff" stroke-width="1.7"/></svg>
<div class="a" style="left:614.0px;top:1199.0px;width:1944.0px;height:2.0px;background:#ddd"></div>
<div class="a" style="left:614.0px;top:1201.0px;width:1944.0px;height:27.4px;background:#f9f9f9;border-bottom:1px solid #e3e3e3"></div>
<svg class="a" style="left:618.6px;top:1208.0px;" width="16.6" height="14.0" viewBox="0 0 16.6 14"><path d="M10.2 1.8 H3.2 Q1 1.8 1 4 V10.6 Q1 12.8 3.2 12.8 H10 Q12.2 12.8 12.2 10.6 V8.6" fill="none" stroke="#007960" stroke-width="1.5"/><path d="M6 7.6 L12.6 1 L15 3.4 L8.4 10 L5.6 10.4 Z" fill="#007960" stroke="#fff" stroke-width=".5"/></svg>
<svg class="a" style="left:652.0px;top:1207.6px;" width="15.4" height="15.4" viewBox="0 0 15.4 15.4"><path d="M15.2 0.2 C10.2 0.4 7.4 2.2 5.2 5.4 L2.2 5.6 L0.2 8.2 L3.6 8.6 L6.8 11.8 L7.2 15.2 L9.8 13.2 L10 10.2 C13.2 8 15 5.2 15.2 0.2 Z" fill="#007960"/><path d="M1.2 11.8 L3.6 11.8 L3.6 14.2 L0.6 14.8 Z" fill="#007960"/></svg>
<svg class="a" style="left:682.6px;top:1207.6px;" width="14.0" height="14.0" viewBox="0 0 14 14"><circle cx="7" cy="7" r="7" fill="#007960"/><rect x="5.9" y="5.6" width="2.6" height="5.2" fill="#fff"/><rect x="5" y="5.6" width="2" height="1.3" fill="#fff"/><rect x="4.8" y="10" width="4.8" height="1.4" fill="#fff"/><circle cx="7" cy="3.4" r="1.4" fill="#fff"/></svg>
<svg class="a" style="left:707.5px;top:1209.4px;" width="11.4" height="11.4" viewBox="0 0 11.4 11.4"><path d="M1.6 1.6 L9.8 9.8 M9.8 1.6 L1.6 9.8" stroke="#007960" stroke-width="3" stroke-linecap="butt"/></svg>
<svg class="a" style="left:732.6px;top:1208.6px;" width="12.6" height="12.6" viewBox="0 0 12.6 12.6"><rect x="0.7" y="0.7" width="11.2" height="11.2" rx="2.2" fill="#fff" stroke="#555" stroke-width="1.3"/></svg>
<svg class="a" style="left:760.8px;top:1205.4px;" width="18.4" height="16.4" viewBox="0 0 16.5 15"><path d="M0.5 9.8 L3.7 1.3 L8.7 11.8 L10.9 4.9 L13 14.1 L15 9.4 L16.2 10.3" fill="none" stroke="#068c45" stroke-width="2.1" stroke-linejoin="miter"/></svg>
<div class="t " style="left:787.4px;top:1209.0px;font-size:13.40px;color:#333;">°F</div>
<div class="t " style="left:812.2px;top:1207.0px;font-size:15.40px;color:#222;">Temp-avg</div>
<div class="t u" style="left:2341.6px;top:1208.2px;font-size:14.10px;color:#11806a;">Area A</div>
<div class="t " style="left:2436.4px;top:1209.0px;font-size:13.40px;color:#333;">1</div>
<svg class="a" style="left:618.6px;top:1236.0px;" width="16.6" height="14.0" viewBox="0 0 16.6 14"><path d="M10.2 1.8 H3.2 Q1 1.8 1 4 V10.6 Q1 12.8 3.2 12.8 H10 Q12.2 12.8 12.2 10.6 V8.6" fill="none" stroke="#007960" stroke-width="1.5"/><path d="M6 7.6 L12.6 1 L15 3.4 L8.4 10 L5.6 10.4 Z" fill="#007960" stroke="#fff" stroke-width=".5"/></svg>
<svg class="a" style="left:652.0px;top:1235.6px;" width="15.4" height="15.4" viewBox="0 0 15.4 15.4"><path d="M15.2 0.2 C10.2 0.4 7.4 2.2 5.2 5.4 L2.2 5.6 L0.2 8.2 L3.6 8.6 L6.8 11.8 L7.2 15.2 L9.8 13.2 L10 10.2 C13.2 8 15 5.2 15.2 0.2 Z" fill="#007960"/><path d="M1.2 11.8 L3.6 11.8 L3.6 14.2 L0.6 14.8 Z" fill="#007960"/></svg>
<svg class="a" style="left:682.6px;top:1235.6px;" width="14.0" height="14.0" viewBox="0 0 14 14"><circle cx="7" cy="7" r="7" fill="#007960"/><rect x="5.9" y="5.6" width="2.6" height="5.2" fill="#fff"/><rect x="5" y="5.6" width="2" height="1.3" fill="#fff"/><rect x="4.8" y="10" width="4.8" height="1.4" fill="#fff"/><circle cx="7" cy="3.4" r="1.4" fill="#fff"/></svg>
<svg class="a" style="left:707.5px;top:1237.4px;" width="11.4" height="11.4" viewBox="0 0 11.4 11.4"><path d="M1.6 1.6 L9.8 9.8 M9.8 1.6 L1.6 9.8" stroke="#007960" stroke-width="3" stroke-linecap="butt"/></svg>
<svg class="a" style="left:732.6px;top:1236.6px;" width="12.6" height="12.6" viewBox="0 0 12.6 12.6"><rect x="0.7" y="0.7" width="11.2" height="11.2" rx="2.2" fill="#fff" stroke="#555" stroke-width="1.3"/></svg>
<svg class="a" style="left:761.2px;top:1231.6px;" width="18.0" height="17.4" viewBox="0 0 18 17"><path d="M1.2 0.5 V15.4 H17.6" fill="none" stroke="#4055a5" stroke-width="1.7"/><g fill="#4055a5"><rect x="4.3" y="8.8" width="2.9" height="5.4"/><rect x="8.3" y="2.6" width="2.9" height="11.6"/><rect x="12.4" y="6.4" width="2.9" height="7.8"/></g></svg>
<div class="t " style="left:812.2px;top:1235.8px;font-size:14.75px;color:#222;">Temp-avg FFT</div>
<div class="t u" style="left:2341.6px;top:1236.2px;font-size:14.10px;color:#11806a;">Area A</div>
</body></html>
